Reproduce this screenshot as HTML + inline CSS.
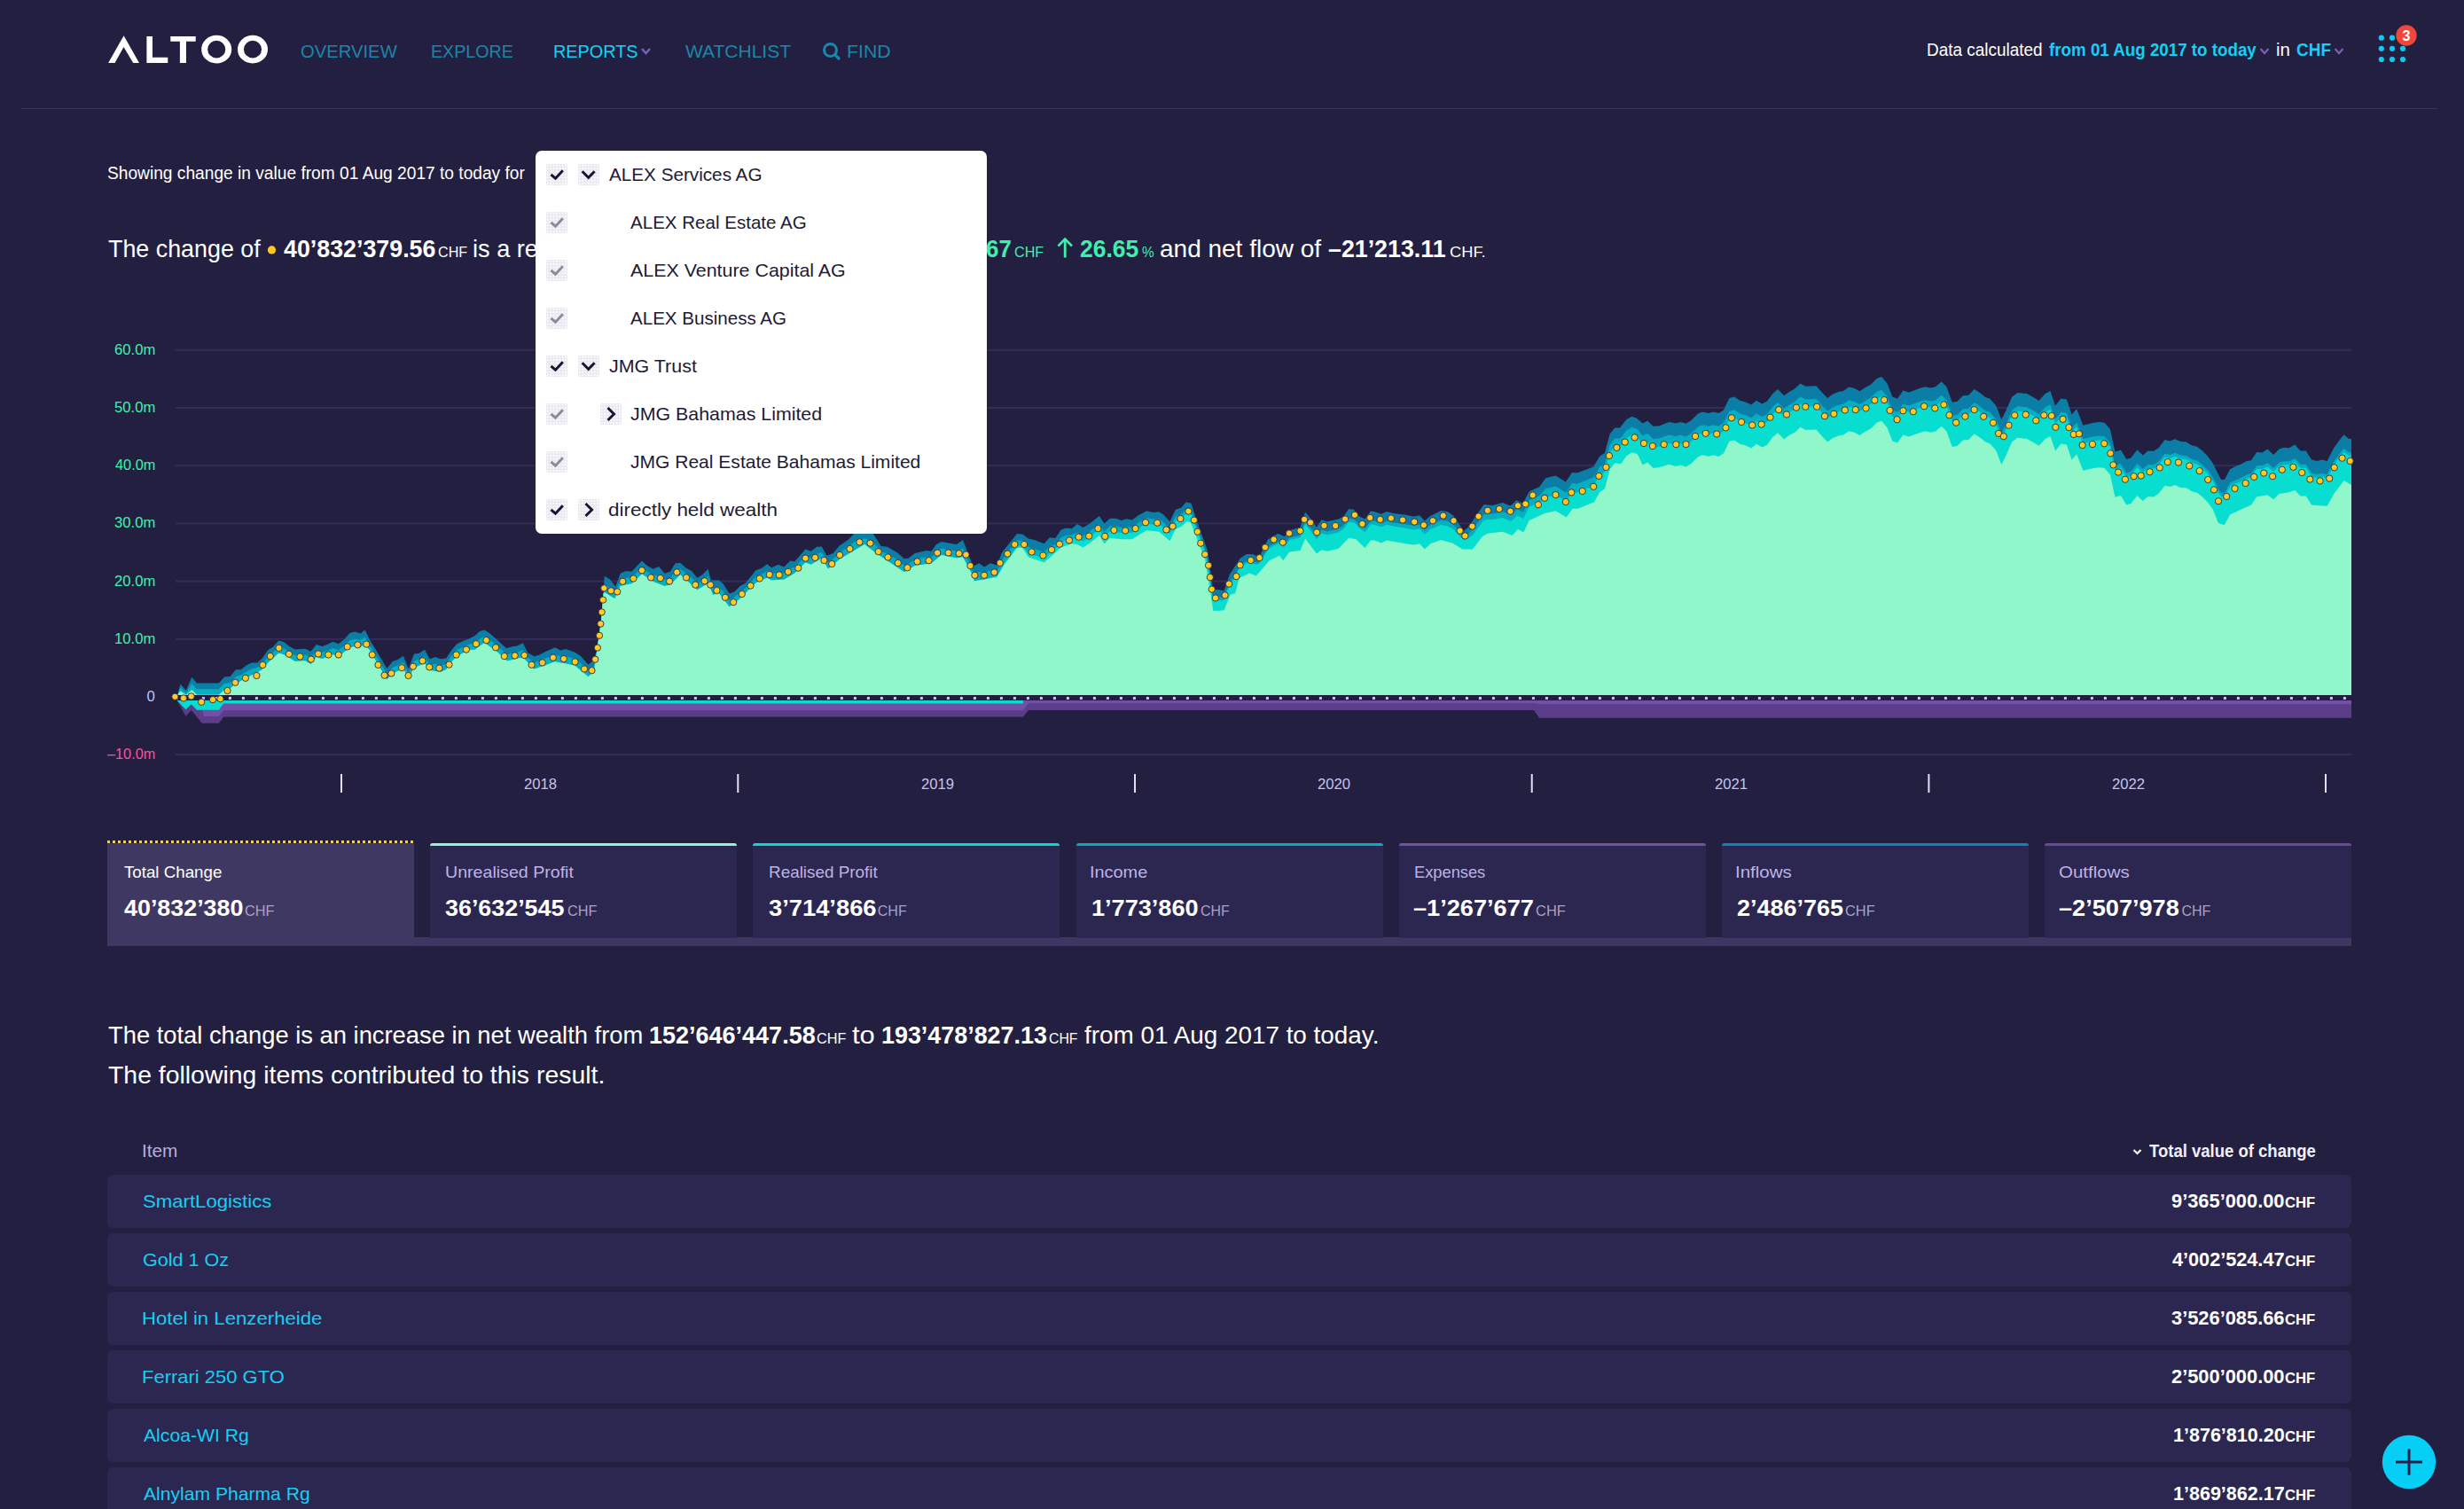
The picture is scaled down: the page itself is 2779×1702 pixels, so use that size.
<!DOCTYPE html>
<html><head><meta charset="utf-8">
<style>
html,body{margin:0;padding:0;}
body{width:2779px;height:1702px;overflow:hidden;background:#231f40;font-family:"Liberation Sans",sans-serif;position:relative;color:#fff;}
.t{position:absolute;white-space:nowrap;line-height:1;}
.b{font-weight:bold;}
.nav{color:#1b86a8;font-size:20.4px;}
.cy{color:#12cdf2;}
.card{position:absolute;top:951px;width:346px;height:106px;background:#2c2750;}
.card .bar{position:absolute;left:0;top:-3px;width:100%;height:4px;border-radius:3px 3px 0 0;}
.cl{position:absolute;left:19px;color:#bdb3e6;font-size:18.4px;white-space:nowrap;line-height:1;}
.cv{position:absolute;left:19px;color:#fff;font-size:25.4px;font-weight:bold;white-space:nowrap;line-height:1;}
.cv span{font-size:16px;font-weight:normal;color:#a9a2c4;}
.row{position:absolute;left:121px;width:2531px;height:60px;background:#2c2750;border-radius:7px;}
.row .n{position:absolute;left:40.7px;color:#12cdf2;font-size:21px;white-space:nowrap;line-height:1;}
.row .v{position:absolute;right:41px;color:#fff;font-size:21.6px;font-weight:bold;white-space:nowrap;line-height:1;}
.row .v span{font-size:16px;}
.dd{position:absolute;left:604px;top:170px;width:509px;height:432px;background:#fff;border-radius:7px;}
.dd .r{position:absolute;left:0;height:54px;width:509px;}
.cb{position:absolute;left:12px;top:13px;width:24px;height:24px;border-radius:2px;background:#e9e9f2 radial-gradient(circle,#fff 0.7px,transparent 1.1px) 0 0/3.4px 3.4px;}
.ex{position:absolute;top:13px;width:24px;height:24px;border-radius:2px;background:#e9e9f2 radial-gradient(circle,#fff 0.7px,transparent 1.1px) 0 0/3.4px 3.4px;}
.dt{position:absolute;color:#1d1a36;font-size:21px;white-space:nowrap;line-height:1;}
.yl{position:absolute;font-size:16.6px;white-space:nowrap;line-height:1;text-align:right;}
.xl{position:absolute;font-size:16.5px;color:#c3c3ef;white-space:nowrap;line-height:1;}
</style></head><body>
<!-- header -->
<svg style="position:absolute;left:0;top:0" width="330" height="90">
<g fill="#fff">
<polygon points="122.1,70.9 139.6,40.3 157,70.9 150.2,70.9 139.5,53 129.5,70.9"/>
<polygon points="165.4,40.9 172,40.9 172,64.8 189.3,64.8 189.3,70.9 165.4,70.9"/>
<polygon points="192.3,40.9 220.7,40.9 220.7,46.8 210,46.8 210,70.9 202.9,70.9 202.9,46.8 192.3,46.8"/>
</g>
<path fill="#fff" fill-rule="evenodd" d="M227.20,55.65 a17,15.85 0 1,0 34,0 a17,15.85 0 1,0 -34,0 Z M234.15,55.65 a10.05,9.8 0 1,0 20.1,0 a10.05,9.8 0 1,0 -20.1,0 Z"/>
<path fill="#fff" fill-rule="evenodd" d="M268.00,55.65 a17,15.85 0 1,0 34,0 a17,15.85 0 1,0 -34,0 Z M274.95,55.65 a10.05,9.8 0 1,0 20.1,0 a10.05,9.8 0 1,0 -20.1,0 Z"/>
</svg>
<svg style="position:absolute;left:720px;top:50px" width="20" height="16"><polyline points="4,5 8.5,10 13,5" fill="none" stroke="#7a5db4" stroke-width="2.6"/></svg>
<svg style="position:absolute;left:926px;top:46px" width="26" height="24"><circle cx="10.5" cy="10.5" r="7" fill="none" stroke="#1b86a8" stroke-width="3"/><line x1="15.5" y1="15.5" x2="21" y2="21" stroke="#1b86a8" stroke-width="3.2"/></svg>

<svg style="position:absolute;left:2546px;top:50px" width="16" height="16"><polyline points="3.5,5 8,10 12.5,5" fill="none" stroke="#7a5db4" stroke-width="2.4"/></svg>
<svg style="position:absolute;left:2630px;top:50px" width="16" height="16"><polyline points="3.5,5 8,10 12.5,5" fill="none" stroke="#7a5db4" stroke-width="2.4"/></svg>
<svg style="position:absolute;left:2670px;top:24px" width="60" height="56">
<g fill="#0ccaf2">
<circle cx="15.8" cy="18.7" r="3.1"/><circle cx="28" cy="18.7" r="3.1"/><circle cx="40" cy="18.7" r="3.1"/>
<circle cx="15.8" cy="30.8" r="3.1"/><circle cx="28" cy="30.8" r="3.1"/><circle cx="40" cy="30.8" r="3.1"/>
<circle cx="15.8" cy="43" r="3.1"/><circle cx="28" cy="43" r="3.1"/><circle cx="40" cy="43" r="3.1"/>
</g>
<circle cx="44" cy="16" r="11.7" fill="#f0473a"/>
<text x="44" y="22" text-anchor="middle" font-family="Liberation Sans" font-weight="bold" font-size="16" fill="#fff">3</text>
</svg>
<div style="position:absolute;left:24px;top:122px;width:2725px;height:1px;background:#3b3659"></div>


<!-- headline -->

<!-- chart -->
<svg style="position:absolute;left:0;top:0" width="2779" height="920">
<g fill="#332d58">
<rect x="198" y="393.8" width="2454" height="2"/>
<rect x="198" y="459" width="2454" height="2"/>
<rect x="198" y="524.2" width="2454" height="2"/>
<rect x="198" y="589.4" width="2454" height="2"/>
<rect x="198" y="654.6" width="2454" height="2"/>
<rect x="198" y="719.8" width="2454" height="2"/>
<rect x="198" y="850" width="2454" height="2"/>
</g>
<path fill="#0a7ea6" d="M199,784.0 L199.0,784.0 L200.0,784.0 L203.5,771.6 L209.9,778.7 L216.3,763.8 L222.0,770.6 L246.8,770.6 L253.2,763.5 L259.6,763.1 L266.0,755.3 L271.7,755.3 L278.0,750.3 L283.8,747.5 L289.4,747.5 L290.1,747.5 L295.8,742.5 L302.2,733.3 L307.9,729.7 L314.3,722.6 L320.0,724.0 L326.4,729.0 L332.8,732.6 L344.1,731.8 L350.5,734.7 L356.9,726.9 L363.3,729.0 L369.0,726.9 L375.4,723.8 L381.8,726.2 L388.2,721.2 L394.5,714.1 L400.2,712.4 L406.6,714.5 L411.6,710.5 L417.3,721.9 L423.7,732.6 L436.4,753.9 L442.8,746.0 L448.5,743.9 L454.9,739.7 L460.6,753.9 L467.0,737.5 L472.7,736.8 L479.0,732.8 L484.7,743.2 L491.1,741.1 L496.8,743.2 L503.2,742.5 L508.9,733.7 L515.3,726.2 L521.7,723.3 L528.0,720.9 L535.7,717.1 L540.7,712.2 L546.3,710.5 L551.3,713.6 L560.5,721.4 L571.2,731.3 L571.9,731.1 L577.6,729.2 L583.3,728.5 L589.7,725.2 L595.3,736.3 L602.4,740.3 L607.4,739.1 L615.2,734.9 L625.9,730.3 L632.3,733.5 L638.0,732.0 L647.9,735.6 L655.0,739.9 L663.5,749.8 L669.9,744.1 L673.5,732.0 L677.7,702.2 L680.6,669.5 L681.7,649.7 L687.7,653.2 L693.4,660.8 L694.1,661.7 L699.7,646.8 L706.1,644.0 L712.5,644.7 L723.9,632.6 L730.3,638.3 L736.7,641.8 L743.1,639.0 L749.5,646.8 L755.9,644.7 L761.5,635.5 L767.2,634.7 L773.6,640.4 L780.0,644.0 L786.4,651.8 L792.1,648.2 L798.5,641.8 L802.0,654.6 L804.2,654.6 L810.5,654.6 L815.5,658.2 L822.6,669.5 L828.3,667.4 L834.7,661.0 L841.1,657.5 L852.4,643.3 L858.8,641.1 L865.2,636.2 L870.0,640.3 L877.8,636.7 L884.2,639.5 L891.3,632.4 L896.3,633.2 L908.4,619.4 L914.7,621.8 L921.1,616.8 L926.8,616.5 L932.5,626.8 L933.9,626.2 L939.6,623.9 L946.7,615.4 L957.4,608.3 L963.8,601.0 L975.1,600.4 L983.6,600.0 L992.2,613.8 L993.6,616.1 L1000.7,616.8 L1012.0,623.2 L1019.9,630.3 L1024.8,629.6 L1031.9,623.9 L1044.7,621.1 L1050.4,621.8 L1056.1,614.0 L1061.8,610.9 L1070.3,612.6 L1078.8,614.0 L1085.9,609.0 L1091.6,623.2 L1097.3,638.8 L1098.7,638.1 L1104.4,635.3 L1110.0,639.5 L1117.2,635.3 L1124.3,637.4 L1130.0,623.2 L1132.8,619.7 L1147.0,601.9 L1152.7,602.5 L1153.4,602.6 L1159.8,607.6 L1166.9,609.0 L1177.5,613.3 L1183.9,606.2 L1190.3,606.9 L1196.7,597.6 L1202.4,595.5 L1208.8,596.2 L1215.0,591.1 L1221.4,595.1 L1228.5,590.9 L1239.8,581.9 L1245.5,590.4 L1251.9,584.7 L1258.3,584.7 L1264.7,586.9 L1270.4,585.2 L1276.8,586.6 L1283.9,581.2 L1293.1,576.2 L1300.9,578.1 L1307.3,577.2 L1312.3,580.5 L1319.4,588.3 L1325.8,574.8 L1332.2,572.7 L1337.8,566.3 L1338.5,566.5 L1342.8,567.5 L1343.5,567.7 L1350.6,589.7 L1359.1,613.0 L1362.0,621.0 L1367.7,665.0 L1368.4,665.0 L1374.1,665.0 L1380.5,666.4 L1386.8,648.0 L1387.6,646.8 L1393.2,638.2 L1397.5,631.6 L1398.9,629.5 L1406.0,624.9 L1408.9,625.0 L1413.1,625.2 L1416.7,626.7 L1420.2,628.1 L1430.2,608.2 L1431.6,607.4 L1441.5,601.8 L1443.0,602.5 L1447.2,604.6 L1448.6,605.3 L1454.3,598.2 L1466.4,594.7 L1472.1,577.6 L1478.5,585.5 L1484.9,594.7 L1490.5,586.2 L1496.9,588.3 L1509.7,585.5 L1515.4,582.6 L1521.1,574.1 L1526.8,574.8 L1529.5,578.1 L1533.2,582.6 L1539.5,585.5 L1545.9,576.6 L1550.0,577.0 L1557.8,579.8 L1564.2,577.0 L1571.3,579.1 L1584.1,580.5 L1594.0,582.5 L1594.7,582.6 L1601.1,581.2 L1606.8,587.6 L1613.2,581.9 L1625.3,576.0 L1632.4,577.0 L1638.0,580.7 L1638.8,581.2 L1649.4,596.8 L1650.9,599.0 L1655.8,594.7 L1660.8,587.5 L1672.2,571.1 L1673.6,569.1 L1677.8,569.4 L1683.5,569.9 L1694.9,567.0 L1703.4,570.6 L1705.5,568.7 L1710.5,564.2 L1711.9,564.9 L1717.6,567.7 L1718.3,566.4 L1724.7,554.2 L1736.1,549.3 L1741.8,541.3 L1743.2,539.3 L1754.5,536.5 L1765.9,543.6 L1766.6,542.5 L1773.0,532.9 L1773.7,533.0 L1778.7,533.6 L1785.8,530.8 L1797.2,526.5 L1797.9,525.3 L1804.3,514.5 L1809.9,510.9 L1815.6,489.6 L1821.3,482.5 L1827.0,482.5 L1828.4,480.7 L1834.1,473.3 L1840.5,469.7 L1846.2,471.8 L1846.9,472.4 L1852.6,477.5 L1858.2,474.7 L1864.6,480.8 L1871.0,480.4 L1882.4,476.1 L1890.0,477.4 L1895.7,476.0 L1901.4,477.8 L1907.0,474.6 L1914.9,466.8 L1919.8,464.6 L1926.9,466.1 L1932.6,464.6 L1938.3,466.1 L1944.0,462.5 L1950.4,449.0 L1956.0,447.6 L1962.4,451.8 L1968.1,453.3 L1975.2,456.5 L1980.9,451.8 L1987.3,455.4 L1993.0,452.6 L1999.4,444.0 L2005.0,439.1 L2012.2,446.2 L2017.8,441.9 L2024.2,438.4 L2030.6,432.4 L2036.3,435.8 L2048.4,435.2 L2054.8,442.6 L2061.2,449.0 L2066.8,444.7 L2073.2,441.9 L2078.9,440.9 L2085.3,436.6 L2091.7,438.1 L2097.4,441.2 L2103.1,437.6 L2110.2,433.4 L2116.6,427.0 L2122.2,424.9 L2128.6,432.7 L2134.3,447.6 L2140.0,449.7 L2146.4,440.5 L2152.8,442.6 L2158.5,440.5 L2164.9,438.1 L2171.2,436.2 L2177.6,437.6 L2182.6,436.6 L2189.7,430.5 L2195.4,436.2 L2201.8,453.7 L2207.5,452.8 L2213.9,446.2 L2220.3,445.7 L2226.6,439.1 L2230.0,441.0 L2234.3,444.1 L2239.2,448.1 L2244.2,449.8 L2251.3,457.6 L2257.3,473.3 L2262.7,462.6 L2269.1,447.7 L2275.5,443.0 L2286.1,444.1 L2293.9,448.4 L2299.6,452.0 L2306.7,444.1 L2312.4,441.0 L2318.1,457.6 L2324.5,449.5 L2330.9,450.5 L2336.5,467.6 L2342.2,461.2 L2349.3,479.7 L2361.4,476.8 L2367.8,476.1 L2373.5,476.8 L2379.9,483.9 L2385.5,509.5 L2391.9,507.4 L2398.3,518.0 L2403.3,516.6 L2410.4,507.4 L2416.8,513.5 L2422.5,508.4 L2428.9,508.8 L2434.5,505.2 L2441.6,496.0 L2447.3,497.4 L2453.0,495.3 L2459.4,498.1 L2465.8,498.4 L2472.2,502.4 L2477.9,503.8 L2484.3,508.8 L2489.9,514.5 L2495.6,522.3 L2502.0,535.0 L2505.0,541.1 L2508.8,541.1 L2515.1,529.3 L2521.4,526.0 L2527.7,523.5 L2534.0,520.0 L2539.0,519.2 L2545.3,509.9 L2551.6,510.4 L2557.4,506.6 L2564.2,512.9 L2570.5,506.6 L2575.6,504.8 L2581.9,505.3 L2588.2,501.6 L2594.5,508.4 L2600.8,508.4 L2607.0,518.4 L2613.4,520.0 L2618.4,518.4 L2624.7,520.0 L2632.2,505.3 L2638.5,496.5 L2643.6,490.2 L2648.6,494.8 L2652.0,495.3 L2652,784.0 Z"/>
<path fill="#05afc2" d="M199,784.0 L199.0,784.0 L200.0,784.0 L203.5,775.5 L209.9,781.4 L216.3,770.9 L222.0,777.2 L246.8,777.2 L253.2,770.8 L259.6,769.9 L266.0,763.1 L271.7,761.6 L278.0,757.4 L283.8,754.5 L289.4,753.1 L290.1,753.0 L295.8,748.9 L302.2,740.4 L307.9,736.1 L314.3,729.7 L320.0,731.1 L326.4,735.5 L332.8,739.3 L344.1,738.5 L350.5,741.8 L356.9,734.0 L363.3,736.1 L369.0,733.9 L375.4,731.0 L381.8,733.3 L388.2,728.3 L394.5,722.2 L400.2,720.7 L406.6,722.1 L411.6,718.7 L417.3,728.0 L423.7,738.8 L436.4,760.2 L442.8,752.8 L448.5,750.4 L454.9,746.8 L460.6,759.5 L467.0,745.4 L472.7,743.8 L479.0,740.5 L484.7,749.6 L491.1,749.1 L496.8,750.6 L503.2,748.9 L508.9,740.2 L515.3,733.3 L521.7,730.0 L528.0,727.0 L535.7,725.0 L540.7,720.7 L546.3,717.8 L551.3,721.1 L560.5,728.2 L571.2,738.1 L571.9,738.3 L577.6,736.7 L583.3,735.7 L589.7,733.2 L595.3,741.8 L602.4,747.5 L607.4,746.0 L615.2,742.5 L625.9,738.3 L632.3,740.5 L638.0,740.3 L647.9,743.0 L655.0,748.1 L663.5,756.5 L669.9,750.9 L673.5,732.0 L677.7,702.2 L680.6,669.5 L681.7,658.9 L687.7,662.5 L693.4,668.0 L694.1,667.7 L699.7,653.9 L706.1,651.8 L712.5,651.5 L723.9,640.0 L730.3,645.0 L736.7,648.9 L743.1,648.8 L749.5,653.9 L755.9,652.2 L761.5,644.7 L767.2,641.5 L773.6,647.1 L780.0,651.8 L786.4,658.5 L792.1,655.1 L798.5,650.0 L802.0,660.3 L804.2,662.8 L810.5,661.7 L815.5,666.7 L822.6,677.0 L828.3,673.8 L834.7,668.1 L841.1,663.2 L852.4,650.4 L858.8,647.9 L865.2,644.0 L870.0,647.4 L877.8,645.4 L884.2,646.6 L891.3,641.0 L896.3,639.9 L908.4,627.0 L914.7,629.2 L921.1,624.9 L926.8,623.0 L932.5,633.1 L933.9,634.0 L939.6,630.4 L946.7,623.2 L957.4,616.5 L963.8,610.9 L975.1,607.2 L983.6,610.2 L992.2,620.3 L993.6,621.9 L1000.7,624.6 L1012.0,631.6 L1019.9,637.8 L1024.8,636.0 L1031.9,631.0 L1044.7,628.6 L1050.4,628.5 L1056.1,622.3 L1061.8,618.5 L1070.3,620.2 L1078.8,621.8 L1085.9,618.6 L1091.6,631.0 L1097.3,644.1 L1098.7,646.7 L1104.4,644.8 L1110.0,646.5 L1117.2,643.6 L1124.3,643.9 L1130.0,631.9 L1132.8,627.8 L1147.0,609.5 L1152.7,609.5 L1153.4,610.0 L1159.8,617.0 L1166.9,618.9 L1177.5,622.8 L1183.9,616.2 L1190.3,614.0 L1196.7,606.2 L1202.4,604.1 L1208.8,603.4 L1215.0,600.7 L1221.4,604.4 L1228.5,600.0 L1239.8,590.7 L1245.5,599.5 L1251.9,593.4 L1258.3,593.6 L1264.7,595.1 L1270.4,594.0 L1276.8,594.7 L1283.9,589.6 L1293.1,584.2 L1300.9,585.6 L1307.3,585.3 L1312.3,589.0 L1319.4,596.2 L1325.8,582.6 L1332.2,580.3 L1337.8,574.3 L1338.5,574.2 L1342.8,575.1 L1343.5,575.9 L1350.6,596.5 L1359.1,619.3 L1362.0,630.9 L1367.7,671.9 L1368.4,673.5 L1374.1,673.3 L1380.5,674.1 L1386.8,656.6 L1387.6,655.1 L1393.2,649.0 L1397.5,638.8 L1398.9,637.1 L1406.0,632.9 L1408.9,632.4 L1413.1,633.1 L1416.7,634.5 L1420.2,634.0 L1430.2,617.0 L1431.6,615.9 L1441.5,610.5 L1443.0,610.7 L1447.2,614.0 L1448.6,613.8 L1454.3,606.4 L1466.4,603.6 L1472.1,587.7 L1478.5,595.8 L1484.9,604.7 L1490.5,597.6 L1496.9,599.4 L1509.7,596.6 L1515.4,592.6 L1521.1,584.9 L1526.8,585.7 L1529.5,588.0 L1533.2,592.2 L1539.5,596.2 L1545.9,587.4 L1550.0,587.6 L1557.8,590.4 L1564.2,587.6 L1571.3,589.4 L1584.1,590.9 L1594.0,592.8 L1594.7,592.8 L1601.1,591.4 L1606.8,597.8 L1613.2,591.9 L1625.3,586.4 L1632.4,587.7 L1638.0,590.7 L1638.8,591.2 L1649.4,603.9 L1650.9,605.5 L1655.8,602.5 L1660.8,597.5 L1672.2,581.5 L1673.6,579.9 L1677.8,579.5 L1683.5,579.5 L1694.9,577.1 L1703.4,580.5 L1705.5,579.5 L1710.5,574.6 L1711.9,574.6 L1717.6,577.5 L1718.3,576.7 L1724.7,564.1 L1736.1,559.1 L1741.8,552.7 L1743.2,551.2 L1754.5,548.4 L1765.9,555.4 L1766.6,554.8 L1773.0,545.3 L1773.7,545.1 L1778.7,545.8 L1785.8,542.9 L1797.2,538.5 L1797.9,537.6 L1804.3,526.6 L1809.9,523.0 L1815.6,501.5 L1821.3,494.4 L1827.0,494.6 L1828.4,493.4 L1834.1,485.7 L1840.5,481.8 L1846.2,483.9 L1846.9,484.4 L1852.6,491.6 L1858.2,488.8 L1864.6,495.0 L1871.0,494.5 L1882.4,490.4 L1890.0,491.9 L1895.7,490.6 L1901.4,492.4 L1907.0,489.2 L1914.9,481.4 L1919.8,479.2 L1926.9,480.7 L1932.6,479.2 L1938.3,480.7 L1944.0,477.1 L1950.4,463.7 L1956.0,462.3 L1962.4,466.5 L1968.1,468.0 L1975.2,471.2 L1980.9,466.5 L1987.3,470.1 L1993.0,467.3 L1999.4,458.7 L2005.0,453.8 L2012.2,461.0 L2017.8,456.7 L2024.2,453.2 L2030.6,447.2 L2036.3,450.6 L2048.4,450.0 L2054.8,457.4 L2061.2,463.8 L2066.8,459.6 L2073.2,456.8 L2078.9,455.8 L2085.3,451.5 L2091.7,453.0 L2097.4,456.1 L2103.1,452.5 L2110.2,448.3 L2116.6,441.9 L2122.2,439.8 L2128.6,447.7 L2134.3,462.6 L2140.0,464.7 L2146.4,455.5 L2152.8,457.6 L2158.5,455.5 L2164.9,453.1 L2171.2,451.2 L2177.6,452.6 L2182.6,451.7 L2189.7,445.6 L2195.4,451.3 L2201.8,468.8 L2207.5,467.9 L2213.9,461.3 L2220.3,460.8 L2226.6,454.2 L2230.0,456.1 L2234.3,459.2 L2239.2,463.2 L2244.2,465.0 L2251.3,472.8 L2257.3,488.5 L2262.7,477.8 L2269.1,462.9 L2275.5,458.2 L2286.1,459.3 L2293.9,463.6 L2299.6,467.3 L2306.7,459.4 L2312.4,456.3 L2318.1,472.9 L2324.5,464.8 L2330.9,465.8 L2336.5,482.9 L2342.2,476.5 L2349.3,495.0 L2361.4,492.2 L2367.8,491.5 L2373.5,492.2 L2379.9,499.3 L2385.5,524.9 L2391.9,522.8 L2398.3,533.4 L2403.3,532.0 L2410.4,522.8 L2416.8,529.0 L2422.5,523.9 L2428.9,524.3 L2434.5,520.7 L2441.6,511.5 L2447.3,512.9 L2453.0,510.8 L2459.4,513.6 L2465.8,513.9 L2472.2,517.9 L2477.9,519.4 L2484.3,524.4 L2489.9,530.1 L2495.6,537.9 L2502.0,551.5 L2505.0,556.1 L2508.8,556.4 L2515.1,544.6 L2521.4,541.4 L2527.7,538.8 L2534.0,535.5 L2539.0,534.3 L2545.3,525.0 L2551.6,525.0 L2557.4,522.1 L2564.2,528.0 L2570.5,521.7 L2575.6,520.2 L2581.9,520.3 L2588.2,516.9 L2594.5,523.7 L2600.8,523.7 L2607.0,533.8 L2613.4,535.0 L2618.4,534.0 L2624.7,535.2 L2632.2,520.8 L2638.5,512.1 L2643.6,505.7 L2648.6,509.8 L2652.0,510.8 L2652,784.0 Z"/>
<path fill="#08ded0" d="M199,784.0 L199.0,784.0 L200.0,784.0 L203.5,779.4 L209.9,784.0 L216.3,778.0 L222.0,783.7 L246.8,783.7 L253.2,778.0 L259.6,776.6 L266.0,771.0 L271.7,767.9 L278.0,764.5 L283.8,761.6 L289.4,758.8 L290.1,758.4 L295.8,755.3 L302.2,747.5 L307.9,742.5 L314.3,736.8 L320.0,738.2 L326.4,742.1 L332.8,746.0 L344.1,745.3 L350.5,748.9 L356.9,741.1 L363.3,743.2 L369.0,740.8 L375.4,738.2 L381.8,740.4 L388.2,735.4 L394.5,730.4 L400.2,729.0 L406.6,729.7 L411.6,726.9 L417.3,734.0 L423.7,744.9 L436.4,766.6 L442.8,759.5 L448.5,756.9 L454.9,753.9 L460.6,765.2 L467.0,753.2 L472.7,750.8 L479.0,748.2 L484.7,756.0 L491.1,757.1 L496.8,758.0 L503.2,755.3 L508.9,746.8 L515.3,740.4 L521.7,736.7 L528.0,733.0 L535.7,732.8 L540.7,729.1 L546.3,725.0 L551.3,728.5 L560.5,735.0 L571.2,744.9 L571.9,745.5 L577.6,744.2 L583.3,742.8 L589.7,741.3 L595.3,747.3 L602.4,754.8 L607.4,753.0 L615.2,750.2 L625.9,746.3 L632.3,747.5 L638.0,748.6 L647.9,750.5 L655.0,756.3 L663.5,763.3 L669.9,757.6 L673.5,732.0 L677.7,702.2 L680.6,669.5 L681.7,668.1 L687.7,671.7 L693.4,675.2 L694.1,673.6 L699.7,661.0 L706.1,659.6 L712.5,658.2 L723.9,647.5 L730.3,651.8 L736.7,656.0 L743.1,658.5 L749.5,661.0 L755.9,659.6 L761.5,654.0 L767.2,648.2 L773.6,653.9 L780.0,659.6 L786.4,665.3 L792.1,662.0 L798.5,658.2 L802.0,666.1 L804.2,671.0 L810.5,668.8 L815.5,675.3 L822.6,684.5 L828.3,680.1 L834.7,675.2 L841.1,668.8 L852.4,657.5 L858.8,654.6 L865.2,651.8 L870.0,654.5 L877.8,654.1 L884.2,653.8 L891.3,649.6 L896.3,646.6 L908.4,634.6 L914.7,636.7 L921.1,632.9 L926.8,629.6 L932.5,639.3 L933.9,641.7 L939.6,636.9 L946.7,631.0 L957.4,624.6 L963.8,620.8 L975.1,614.0 L983.6,620.4 L992.2,626.8 L993.6,627.7 L1000.7,632.4 L1012.0,640.0 L1019.9,645.2 L1024.8,642.3 L1031.9,638.1 L1044.7,636.2 L1050.4,635.3 L1056.1,630.7 L1061.8,626.0 L1070.3,627.8 L1078.8,629.6 L1085.9,628.2 L1091.6,638.8 L1097.3,649.5 L1098.7,655.2 L1104.4,654.2 L1110.0,653.4 L1117.2,651.5 L1124.3,649.9 L1130.0,639.7 L1132.8,635.0 L1147.0,615.9 L1152.7,615.1 L1153.4,616.0 L1159.8,624.5 L1166.9,626.4 L1177.5,629.6 L1183.9,623.2 L1190.3,618.8 L1196.7,611.7 L1202.4,609.5 L1208.8,608.1 L1215.0,607.0 L1221.4,610.5 L1228.5,606.1 L1239.8,596.9 L1245.5,605.8 L1251.9,599.6 L1258.3,600.0 L1264.7,601.1 L1270.4,600.5 L1276.8,600.9 L1283.9,596.1 L1293.1,590.6 L1300.9,591.7 L1307.3,591.5 L1312.3,595.2 L1319.4,601.7 L1325.8,588.0 L1332.2,585.2 L1337.8,579.3 L1338.5,579.0 L1342.8,579.6 L1343.5,580.7 L1350.6,600.3 L1359.1,622.5 L1362.0,635.8 L1367.7,675.1 L1368.4,677.4 L1374.1,676.9 L1380.5,677.2 L1386.8,659.8 L1387.6,658.1 L1393.2,652.6 L1397.5,641.0 L1398.9,639.4 L1406.0,635.3 L1408.9,634.7 L1413.1,635.5 L1416.7,636.9 L1420.2,635.9 L1430.2,619.8 L1431.6,618.6 L1441.5,613.3 L1443.0,613.4 L1447.2,617.1 L1448.6,616.6 L1454.3,609.1 L1466.4,606.5 L1472.1,591.1 L1478.5,599.2 L1484.9,608.1 L1490.5,601.5 L1496.9,603.3 L1509.7,600.5 L1515.4,596.2 L1521.1,588.8 L1526.8,589.6 L1529.5,591.6 L1533.2,595.8 L1539.5,600.2 L1545.9,591.5 L1550.0,591.7 L1557.8,594.5 L1564.2,591.7 L1571.3,593.5 L1584.1,595.5 L1594.0,597.5 L1594.7,597.5 L1601.1,596.3 L1606.8,602.8 L1613.2,596.9 L1625.3,591.9 L1632.4,593.6 L1638.0,596.3 L1638.8,596.8 L1649.4,608.1 L1650.9,609.3 L1655.8,607.2 L1660.8,603.7 L1672.2,588.2 L1673.6,586.9 L1677.8,586.0 L1683.5,586.0 L1694.9,584.0 L1703.4,587.7 L1705.5,587.2 L1710.5,582.3 L1711.9,581.8 L1717.6,584.9 L1718.3,584.5 L1724.7,571.7 L1736.1,566.9 L1741.8,561.9 L1743.2,560.9 L1754.5,558.3 L1765.9,565.0 L1766.6,564.8 L1773.0,555.4 L1773.7,554.8 L1778.7,555.4 L1785.8,552.5 L1797.2,547.8 L1797.9,547.1 L1804.3,535.9 L1809.9,532.2 L1815.6,510.5 L1821.3,503.3 L1827.0,503.5 L1828.4,502.7 L1834.1,494.6 L1840.5,490.6 L1846.2,492.5 L1846.9,492.9 L1852.6,501.4 L1858.2,498.5 L1864.6,504.7 L1871.0,504.0 L1882.4,499.9 L1890.0,501.5 L1895.7,500.1 L1901.4,501.9 L1907.0,498.6 L1914.9,490.8 L1919.8,488.5 L1926.9,490.0 L1932.6,488.4 L1938.3,489.9 L1944.0,486.2 L1950.4,472.7 L1956.0,471.2 L1962.4,475.4 L1968.1,476.8 L1975.2,480.0 L1980.9,475.2 L1987.3,478.8 L1993.0,476.0 L1999.4,467.3 L2005.0,462.4 L2012.2,469.4 L2017.8,465.1 L2024.2,461.5 L2030.6,455.5 L2036.3,458.8 L2048.4,458.1 L2054.8,465.5 L2061.2,471.8 L2066.8,467.5 L2073.2,464.6 L2078.9,463.6 L2085.3,459.2 L2091.7,460.7 L2097.4,463.7 L2103.1,460.1 L2110.2,455.8 L2116.6,449.4 L2122.2,447.2 L2128.6,455.0 L2134.3,469.8 L2140.0,471.9 L2146.4,462.6 L2152.8,464.7 L2158.5,462.5 L2164.9,460.1 L2171.2,458.1 L2177.6,459.5 L2182.6,458.4 L2189.7,452.3 L2195.4,457.9 L2201.8,475.4 L2207.5,474.4 L2213.9,467.8 L2220.3,467.2 L2226.6,460.6 L2230.0,462.4 L2234.3,465.5 L2239.2,469.5 L2244.2,471.1 L2251.3,478.9 L2257.3,494.5 L2262.7,483.8 L2269.1,468.8 L2275.5,464.1 L2286.1,465.1 L2293.9,469.3 L2299.6,472.8 L2306.7,464.9 L2312.4,461.7 L2318.1,478.3 L2324.5,470.1 L2330.9,471.1 L2336.5,488.1 L2342.2,481.7 L2349.3,500.1 L2361.4,497.1 L2367.8,496.4 L2373.5,497.0 L2379.9,504.1 L2385.5,529.6 L2391.9,527.4 L2398.3,538.0 L2403.3,536.5 L2410.4,527.3 L2416.8,533.3 L2422.5,528.2 L2428.9,528.5 L2434.5,524.9 L2441.6,515.6 L2447.3,517.0 L2453.0,515.0 L2459.4,517.8 L2465.8,518.1 L2472.2,522.1 L2477.9,523.5 L2484.3,528.5 L2489.9,534.2 L2495.6,542.0 L2502.0,555.9 L2505.0,560.1 L2508.8,560.5 L2515.1,548.7 L2521.4,545.6 L2527.7,542.9 L2534.0,539.7 L2539.0,538.4 L2545.3,529.1 L2551.6,528.9 L2557.4,526.2 L2564.2,532.1 L2570.5,525.8 L2575.6,524.3 L2581.9,524.3 L2588.2,521.0 L2594.5,527.8 L2600.8,527.8 L2607.0,537.9 L2613.4,539.0 L2618.4,538.1 L2624.7,539.3 L2632.2,524.9 L2638.5,516.3 L2643.6,509.8 L2648.6,513.8 L2652.0,514.9 L2652,784.0 Z"/>
<path fill="#8ff7c9" d="M199,784.0 L199.0,784.0 L200.0,784.0 L203.5,779.4 L209.9,784.0 L216.3,778.0 L222.0,783.7 L246.8,783.7 L253.2,778.0 L259.6,776.6 L266.0,771.0 L271.7,767.9 L278.0,764.5 L283.8,761.6 L289.4,758.8 L290.1,758.4 L295.8,755.3 L302.2,747.5 L307.9,742.5 L314.3,736.8 L320.0,738.2 L326.4,742.1 L332.8,746.0 L344.1,745.3 L350.5,748.9 L356.9,741.1 L363.3,743.2 L369.0,740.8 L375.4,738.2 L381.8,740.4 L388.2,735.4 L394.5,730.4 L400.2,729.0 L406.6,729.7 L411.6,726.9 L417.3,734.0 L423.7,744.9 L436.4,766.6 L442.8,759.5 L448.5,756.9 L454.9,753.9 L460.6,765.2 L467.0,753.2 L472.7,750.8 L479.0,748.2 L484.7,756.0 L491.1,757.1 L496.8,758.0 L503.2,755.3 L508.9,746.8 L515.3,740.4 L521.7,736.7 L528.0,733.0 L535.7,732.8 L540.7,729.1 L546.3,725.0 L551.3,728.5 L560.5,735.0 L571.2,744.9 L571.9,745.5 L577.6,744.2 L583.3,742.8 L589.7,741.3 L595.3,747.3 L602.4,754.8 L607.4,753.0 L615.2,750.2 L625.9,746.3 L632.3,747.5 L638.0,748.6 L647.9,750.5 L655.0,756.3 L663.5,763.3 L669.9,757.6 L673.5,732.0 L677.7,702.2 L680.6,669.5 L681.7,668.1 L687.7,671.7 L693.4,675.2 L694.1,673.6 L699.7,661.0 L706.1,659.6 L712.5,658.2 L723.9,647.5 L730.3,651.8 L736.7,656.0 L743.1,658.5 L749.5,661.0 L755.9,659.6 L761.5,654.0 L767.2,648.2 L773.6,653.9 L780.0,659.6 L786.4,665.3 L792.1,662.0 L798.5,658.2 L802.0,666.1 L804.2,671.0 L810.5,668.8 L815.5,675.3 L822.6,684.5 L828.3,680.1 L834.7,675.2 L841.1,668.8 L852.4,657.5 L858.8,654.6 L865.2,651.8 L870.0,654.5 L877.8,654.1 L884.2,653.8 L891.3,649.6 L896.3,646.6 L908.4,634.6 L914.7,636.7 L921.1,632.9 L926.8,629.6 L932.5,639.3 L933.9,641.7 L939.6,636.9 L946.7,631.0 L957.4,624.6 L963.8,620.8 L975.1,614.0 L983.6,620.4 L992.2,626.8 L993.6,627.7 L1000.7,632.4 L1012.0,640.0 L1019.9,645.2 L1024.8,642.3 L1031.9,638.1 L1044.7,636.2 L1050.4,635.3 L1056.1,630.7 L1061.8,626.0 L1070.3,627.8 L1078.8,629.6 L1085.9,628.2 L1091.6,638.8 L1097.3,649.5 L1098.7,655.2 L1104.4,654.5 L1110.0,653.8 L1117.2,652.3 L1124.3,650.9 L1130.0,641.4 L1132.8,636.7 L1147.0,618.2 L1152.7,617.5 L1153.4,618.6 L1159.8,628.2 L1166.9,630.8 L1177.5,634.6 L1183.9,628.9 L1190.3,623.2 L1196.7,617.5 L1202.4,615.5 L1208.8,613.3 L1215.0,614.0 L1221.4,617.4 L1228.5,613.0 L1239.8,603.9 L1245.5,613.2 L1251.9,606.8 L1258.3,607.5 L1264.7,608.2 L1270.4,608.2 L1276.8,608.2 L1283.9,603.8 L1293.1,598.2 L1300.9,599.0 L1307.3,599.7 L1312.3,604.1 L1319.4,610.3 L1325.8,596.8 L1332.2,594.0 L1337.8,588.9 L1338.5,588.3 L1342.8,589.0 L1343.5,590.8 L1350.6,609.1 L1359.1,630.9 L1362.0,649.0 L1367.7,684.7 L1368.4,689.1 L1374.1,688.8 L1380.5,688.4 L1386.8,672.7 L1387.6,670.7 L1393.2,669.3 L1397.5,652.2 L1398.9,651.5 L1406.0,648.0 L1408.9,646.5 L1413.1,648.1 L1416.7,649.4 L1420.2,645.4 L1430.2,633.9 L1431.6,632.3 L1441.5,627.4 L1443.0,626.6 L1447.2,632.3 L1448.6,630.3 L1454.3,622.4 L1466.4,621.0 L1472.1,607.5 L1478.5,616.0 L1484.9,624.5 L1490.5,620.3 L1496.9,621.7 L1509.7,618.8 L1515.4,612.8 L1521.1,606.8 L1526.8,607.8 L1529.5,608.2 L1533.2,611.9 L1539.5,618.1 L1545.9,609.6 L1550.0,609.6 L1557.8,612.5 L1564.2,609.6 L1571.3,610.8 L1584.1,612.9 L1594.0,614.6 L1594.7,614.5 L1601.1,613.2 L1606.8,619.6 L1613.2,613.2 L1625.3,608.9 L1632.4,610.9 L1638.0,612.5 L1638.8,613.0 L1649.4,619.6 L1650.9,619.6 L1655.8,619.6 L1660.8,619.6 L1672.2,604.7 L1673.6,604.0 L1677.8,601.8 L1683.5,601.1 L1694.9,599.7 L1703.4,603.1 L1705.5,603.9 L1710.5,598.4 L1711.9,596.8 L1717.6,600.0 L1718.3,600.4 L1724.7,586.9 L1736.1,581.7 L1741.8,579.1 L1743.2,578.8 L1754.5,576.3 L1765.9,583.0 L1766.6,583.4 L1773.0,574.4 L1773.7,573.4 L1778.7,574.1 L1785.8,571.2 L1797.2,566.6 L1797.9,566.3 L1804.3,554.9 L1809.9,551.4 L1815.6,529.4 L1821.3,522.3 L1827.0,522.9 L1828.4,523.0 L1834.1,514.5 L1840.5,510.2 L1846.2,512.1 L1846.9,512.3 L1852.6,524.4 L1858.2,521.6 L1864.6,528.0 L1871.0,527.3 L1882.4,523.7 L1890.0,525.9 L1895.7,524.5 L1901.4,526.4 L1907.0,523.2 L1914.9,515.4 L1919.8,513.3 L1926.9,514.8 L1932.6,513.3 L1938.3,514.9 L1944.0,511.3 L1950.4,497.8 L1956.0,496.5 L1962.4,500.7 L1968.1,502.2 L1975.2,505.5 L1980.9,500.8 L1987.3,504.5 L1993.0,501.7 L1999.4,493.1 L2005.0,488.3 L2012.2,495.4 L2017.8,491.1 L2024.2,487.7 L2030.6,481.7 L2036.3,485.1 L2048.4,484.6 L2054.8,492.0 L2061.2,498.5 L2066.8,494.2 L2073.2,491.4 L2078.9,490.5 L2085.3,486.2 L2091.7,487.8 L2097.4,490.9 L2103.1,487.3 L2110.2,483.2 L2116.6,476.8 L2122.2,474.7 L2128.6,482.6 L2134.3,497.5 L2140.0,499.6 L2146.4,490.5 L2152.8,492.6 L2158.5,490.5 L2164.9,488.2 L2171.2,486.3 L2177.6,487.7 L2182.6,486.8 L2189.7,480.7 L2195.4,486.4 L2201.8,504.0 L2207.5,503.1 L2213.9,496.6 L2220.3,496.1 L2226.6,489.5 L2230.0,491.4 L2234.3,494.6 L2239.2,498.6 L2244.2,500.3 L2251.3,508.2 L2257.3,523.9 L2262.7,513.2 L2269.1,498.4 L2275.5,493.7 L2286.1,494.9 L2293.9,499.2 L2299.6,502.8 L2306.7,495.0 L2312.4,491.9 L2318.1,508.5 L2324.5,500.5 L2330.9,501.5 L2336.5,518.7 L2342.2,512.3 L2349.3,530.8 L2361.4,528.0 L2367.8,527.3 L2373.5,528.1 L2379.9,535.2 L2385.5,560.8 L2391.9,558.8 L2398.3,569.4 L2403.3,568.0 L2410.4,558.9 L2416.8,565.0 L2422.5,559.9 L2428.9,560.4 L2434.5,556.8 L2441.6,547.7 L2447.3,549.1 L2453.0,547.0 L2459.4,549.9 L2465.8,550.2 L2472.2,554.2 L2477.9,555.7 L2484.3,560.7 L2489.9,566.4 L2495.6,574.3 L2502.0,590.0 L2505.0,591.0 L2508.8,592.2 L2515.1,580.4 L2521.4,577.5 L2527.7,574.6 L2534.0,571.8 L2539.0,569.6 L2545.3,560.3 L2551.6,559.2 L2557.4,558.2 L2564.2,563.3 L2570.5,557.0 L2575.6,556.2 L2581.9,555.2 L2588.2,552.7 L2594.5,559.5 L2600.8,559.5 L2607.0,569.6 L2613.4,570.0 L2618.4,570.4 L2624.7,570.8 L2632.2,557.0 L2638.5,548.7 L2643.6,541.9 L2648.6,544.9 L2652.0,546.9 L2652,784.0 Z"/>
<!-- negative layers -->
<polygon fill="#5c3d8a" points="199.7,790 209.5,807.7 215.8,801.1 228,815.7 246.8,815.7 252.2,808.6 1154,808.6 1160,801 1730,801 1736,809.7 2652,809.7 2652,790"/>
<polygon fill="#7150a8" points="199.7,790 209.5,800.2 215.8,794.3 222,800.8 228,800.8 230,808 246.8,808 252.2,801.1 1154,801.1 1160,793.2 1730,793.2 1736,794.2 2652,794.2 2652,790"/>
<polygon fill="#07dccf" points="199.7,790 209.5,800.2 215.8,794.3 222,800.8 246.8,800.8 252.2,793.4 1154,793.4 1154,790"/>
<rect x="199" y="784" width="1453" height="6" fill="#221d3d"/>
<rect x="199" y="784" width="2453" height="6" fill="#221d3d"/>
<g fill="#cbc5f2" id="zsq"><rect x="197.9" y="786" width="3" height="3"/><rect x="212.9" y="786" width="3" height="3"/><rect x="227.9" y="786" width="3" height="3"/><rect x="242.9" y="786" width="3" height="3"/><rect x="257.9" y="786" width="3" height="3"/><rect x="272.9" y="786" width="3" height="3"/><rect x="287.9" y="786" width="3" height="3"/><rect x="302.9" y="786" width="3" height="3"/><rect x="317.9" y="786" width="3" height="3"/><rect x="332.9" y="786" width="3" height="3"/><rect x="347.9" y="786" width="3" height="3"/><rect x="362.9" y="786" width="3" height="3"/><rect x="377.9" y="786" width="3" height="3"/><rect x="392.9" y="786" width="3" height="3"/><rect x="407.9" y="786" width="3" height="3"/><rect x="422.9" y="786" width="3" height="3"/><rect x="437.9" y="786" width="3" height="3"/><rect x="452.9" y="786" width="3" height="3"/><rect x="467.9" y="786" width="3" height="3"/><rect x="482.9" y="786" width="3" height="3"/><rect x="497.9" y="786" width="3" height="3"/><rect x="512.9" y="786" width="3" height="3"/><rect x="527.9" y="786" width="3" height="3"/><rect x="542.9" y="786" width="3" height="3"/><rect x="557.9" y="786" width="3" height="3"/><rect x="572.9" y="786" width="3" height="3"/><rect x="587.9" y="786" width="3" height="3"/><rect x="602.9" y="786" width="3" height="3"/><rect x="617.9" y="786" width="3" height="3"/><rect x="632.9" y="786" width="3" height="3"/><rect x="647.9" y="786" width="3" height="3"/><rect x="662.9" y="786" width="3" height="3"/><rect x="677.9" y="786" width="3" height="3"/><rect x="692.9" y="786" width="3" height="3"/><rect x="707.9" y="786" width="3" height="3"/><rect x="722.9" y="786" width="3" height="3"/><rect x="737.9" y="786" width="3" height="3"/><rect x="752.9" y="786" width="3" height="3"/><rect x="767.9" y="786" width="3" height="3"/><rect x="782.9" y="786" width="3" height="3"/><rect x="797.9" y="786" width="3" height="3"/><rect x="812.9" y="786" width="3" height="3"/><rect x="827.9" y="786" width="3" height="3"/><rect x="842.9" y="786" width="3" height="3"/><rect x="857.9" y="786" width="3" height="3"/><rect x="872.9" y="786" width="3" height="3"/><rect x="887.9" y="786" width="3" height="3"/><rect x="902.9" y="786" width="3" height="3"/><rect x="917.9" y="786" width="3" height="3"/><rect x="932.9" y="786" width="3" height="3"/><rect x="947.9" y="786" width="3" height="3"/><rect x="962.9" y="786" width="3" height="3"/><rect x="977.9" y="786" width="3" height="3"/><rect x="992.9" y="786" width="3" height="3"/><rect x="1007.9" y="786" width="3" height="3"/><rect x="1022.9" y="786" width="3" height="3"/><rect x="1037.9" y="786" width="3" height="3"/><rect x="1052.9" y="786" width="3" height="3"/><rect x="1067.9" y="786" width="3" height="3"/><rect x="1082.9" y="786" width="3" height="3"/><rect x="1097.9" y="786" width="3" height="3"/><rect x="1112.9" y="786" width="3" height="3"/><rect x="1127.9" y="786" width="3" height="3"/><rect x="1142.9" y="786" width="3" height="3"/><rect x="1157.9" y="786" width="3" height="3"/><rect x="1172.9" y="786" width="3" height="3"/><rect x="1187.9" y="786" width="3" height="3"/><rect x="1202.9" y="786" width="3" height="3"/><rect x="1217.9" y="786" width="3" height="3"/><rect x="1232.9" y="786" width="3" height="3"/><rect x="1247.9" y="786" width="3" height="3"/><rect x="1262.9" y="786" width="3" height="3"/><rect x="1277.9" y="786" width="3" height="3"/><rect x="1292.9" y="786" width="3" height="3"/><rect x="1307.9" y="786" width="3" height="3"/><rect x="1322.9" y="786" width="3" height="3"/><rect x="1337.9" y="786" width="3" height="3"/><rect x="1352.9" y="786" width="3" height="3"/><rect x="1367.9" y="786" width="3" height="3"/><rect x="1382.9" y="786" width="3" height="3"/><rect x="1397.9" y="786" width="3" height="3"/><rect x="1412.9" y="786" width="3" height="3"/><rect x="1427.9" y="786" width="3" height="3"/><rect x="1442.9" y="786" width="3" height="3"/><rect x="1457.9" y="786" width="3" height="3"/><rect x="1472.9" y="786" width="3" height="3"/><rect x="1487.9" y="786" width="3" height="3"/><rect x="1502.9" y="786" width="3" height="3"/><rect x="1517.9" y="786" width="3" height="3"/><rect x="1532.9" y="786" width="3" height="3"/><rect x="1547.9" y="786" width="3" height="3"/><rect x="1562.9" y="786" width="3" height="3"/><rect x="1577.9" y="786" width="3" height="3"/><rect x="1592.9" y="786" width="3" height="3"/><rect x="1607.9" y="786" width="3" height="3"/><rect x="1622.9" y="786" width="3" height="3"/><rect x="1637.9" y="786" width="3" height="3"/><rect x="1652.9" y="786" width="3" height="3"/><rect x="1667.9" y="786" width="3" height="3"/><rect x="1682.9" y="786" width="3" height="3"/><rect x="1697.9" y="786" width="3" height="3"/><rect x="1712.9" y="786" width="3" height="3"/><rect x="1727.9" y="786" width="3" height="3"/><rect x="1742.9" y="786" width="3" height="3"/><rect x="1757.9" y="786" width="3" height="3"/><rect x="1772.9" y="786" width="3" height="3"/><rect x="1787.9" y="786" width="3" height="3"/><rect x="1802.9" y="786" width="3" height="3"/><rect x="1817.9" y="786" width="3" height="3"/><rect x="1832.9" y="786" width="3" height="3"/><rect x="1847.9" y="786" width="3" height="3"/><rect x="1862.9" y="786" width="3" height="3"/><rect x="1877.9" y="786" width="3" height="3"/><rect x="1892.9" y="786" width="3" height="3"/><rect x="1907.9" y="786" width="3" height="3"/><rect x="1922.9" y="786" width="3" height="3"/><rect x="1937.9" y="786" width="3" height="3"/><rect x="1952.9" y="786" width="3" height="3"/><rect x="1967.9" y="786" width="3" height="3"/><rect x="1982.9" y="786" width="3" height="3"/><rect x="1997.9" y="786" width="3" height="3"/><rect x="2012.9" y="786" width="3" height="3"/><rect x="2027.9" y="786" width="3" height="3"/><rect x="2042.9" y="786" width="3" height="3"/><rect x="2057.9" y="786" width="3" height="3"/><rect x="2072.9" y="786" width="3" height="3"/><rect x="2087.9" y="786" width="3" height="3"/><rect x="2102.9" y="786" width="3" height="3"/><rect x="2117.9" y="786" width="3" height="3"/><rect x="2132.9" y="786" width="3" height="3"/><rect x="2147.9" y="786" width="3" height="3"/><rect x="2162.9" y="786" width="3" height="3"/><rect x="2177.9" y="786" width="3" height="3"/><rect x="2192.9" y="786" width="3" height="3"/><rect x="2207.9" y="786" width="3" height="3"/><rect x="2222.9" y="786" width="3" height="3"/><rect x="2237.9" y="786" width="3" height="3"/><rect x="2252.9" y="786" width="3" height="3"/><rect x="2267.9" y="786" width="3" height="3"/><rect x="2282.9" y="786" width="3" height="3"/><rect x="2297.9" y="786" width="3" height="3"/><rect x="2312.9" y="786" width="3" height="3"/><rect x="2327.9" y="786" width="3" height="3"/><rect x="2342.9" y="786" width="3" height="3"/><rect x="2357.9" y="786" width="3" height="3"/><rect x="2372.9" y="786" width="3" height="3"/><rect x="2387.9" y="786" width="3" height="3"/><rect x="2402.9" y="786" width="3" height="3"/><rect x="2417.9" y="786" width="3" height="3"/><rect x="2432.9" y="786" width="3" height="3"/><rect x="2447.9" y="786" width="3" height="3"/><rect x="2462.9" y="786" width="3" height="3"/><rect x="2477.9" y="786" width="3" height="3"/><rect x="2492.9" y="786" width="3" height="3"/><rect x="2507.9" y="786" width="3" height="3"/><rect x="2522.9" y="786" width="3" height="3"/><rect x="2537.9" y="786" width="3" height="3"/><rect x="2552.9" y="786" width="3" height="3"/><rect x="2567.9" y="786" width="3" height="3"/><rect x="2582.9" y="786" width="3" height="3"/><rect x="2597.9" y="786" width="3" height="3"/><rect x="2612.9" y="786" width="3" height="3"/><rect x="2627.9" y="786" width="3" height="3"/><rect x="2642.9" y="786" width="3" height="3"/></g>
<g fill="#ffca22" stroke="#35263e" stroke-width="0.9"><circle cx="197.4" cy="785.8" r="3.65"/><circle cx="207.0" cy="787.5" r="3.65"/><circle cx="215.6" cy="785.4" r="3.65"/><circle cx="227.2" cy="791.8" r="3.65"/><circle cx="240.0" cy="789.1" r="3.65"/><circle cx="248.5" cy="788.2" r="3.65"/><circle cx="256.5" cy="779.0" r="3.65"/><circle cx="265.3" cy="769.8" r="3.65"/><circle cx="276.9" cy="764.8" r="3.65"/><circle cx="289.4" cy="762.0" r="3.65"/><circle cx="296.3" cy="750.0" r="3.65"/><circle cx="304.8" cy="740.1" r="3.65"/><circle cx="314.6" cy="730.9" r="3.65"/><circle cx="325.9" cy="737.7" r="3.65"/><circle cx="338.4" cy="740.5" r="3.65"/><circle cx="350.8" cy="743.6" r="3.65"/><circle cx="359.0" cy="737.5" r="3.65"/><circle cx="370.4" cy="738.5" r="3.65"/><circle cx="381.8" cy="738.5" r="3.65"/><circle cx="391.7" cy="729.4" r="3.65"/><circle cx="403.4" cy="727.3" r="3.65"/><circle cx="413.3" cy="726.6" r="3.65"/><circle cx="419.8" cy="738.5" r="3.65"/><circle cx="426.5" cy="749.9" r="3.65"/><circle cx="433.6" cy="761.7" r="3.65"/><circle cx="441.4" cy="759.5" r="3.65"/><circle cx="453.1" cy="753.2" r="3.65"/><circle cx="460.6" cy="762.0" r="3.65"/><circle cx="465.9" cy="751.7" r="3.65"/><circle cx="476.5" cy="745.3" r="3.65"/><circle cx="484.3" cy="752.4" r="3.65"/><circle cx="495.4" cy="753.6" r="3.65"/><circle cx="506.5" cy="749.6" r="3.65"/><circle cx="514.6" cy="738.5" r="3.65"/><circle cx="525.9" cy="732.6" r="3.65"/><circle cx="536.9" cy="726.2" r="3.65"/><circle cx="548.5" cy="722.1" r="3.65"/><circle cx="559.1" cy="730.3" r="3.65"/><circle cx="568.8" cy="740.1" r="3.65"/><circle cx="580.7" cy="739.4" r="3.65"/><circle cx="591.4" cy="739.1" r="3.65"/><circle cx="599.6" cy="749.8" r="3.65"/><circle cx="611.7" cy="747.4" r="3.65"/><circle cx="623.8" cy="741.7" r="3.65"/><circle cx="635.8" cy="743.1" r="3.65"/><circle cx="648.6" cy="746.5" r="3.65"/><circle cx="659.0" cy="754.5" r="3.65"/><circle cx="667.5" cy="756.2" r="3.65"/><circle cx="671.3" cy="743.7" r="3.65"/><circle cx="673.9" cy="730.6" r="3.65"/><circle cx="676.0" cy="716.8" r="3.65"/><circle cx="677.4" cy="703.6" r="3.65"/><circle cx="678.7" cy="690.4" r="3.65"/><circle cx="680.1" cy="676.6" r="3.65"/><circle cx="681.3" cy="663.4" r="3.65"/><circle cx="689.1" cy="666.3" r="3.65"/><circle cx="696.2" cy="667.4" r="3.65"/><circle cx="702.3" cy="655.8" r="3.65"/><circle cx="714.4" cy="652.5" r="3.65"/><circle cx="723.9" cy="643.3" r="3.65"/><circle cx="734.1" cy="651.4" r="3.65"/><circle cx="744.8" cy="652.1" r="3.65"/><circle cx="755.1" cy="655.6" r="3.65"/><circle cx="763.4" cy="645.4" r="3.65"/><circle cx="774.0" cy="651.4" r="3.65"/><circle cx="784.3" cy="659.6" r="3.65"/><circle cx="794.6" cy="655.3" r="3.65"/><circle cx="801.3" cy="659.6" r="3.65"/><circle cx="808.4" cy="666.0" r="3.65"/><circle cx="817.9" cy="673.8" r="3.65"/><circle cx="827.2" cy="679.2" r="3.65"/><circle cx="836.8" cy="670.0" r="3.65"/><circle cx="846.5" cy="660.6" r="3.65"/><circle cx="856.7" cy="652.5" r="3.65"/><circle cx="867.8" cy="648.0" r="3.65"/><circle cx="878.8" cy="648.4" r="3.65"/><circle cx="888.9" cy="644.9" r="3.65"/><circle cx="900.3" cy="640.7" r="3.65"/><circle cx="908.4" cy="629.6" r="3.65"/><circle cx="919.3" cy="628.9" r="3.65"/><circle cx="929.4" cy="632.0" r="3.65"/><circle cx="938.2" cy="636.0" r="3.65"/><circle cx="947.1" cy="626.0" r="3.65"/><circle cx="958.5" cy="619.0" r="3.65"/><circle cx="969.4" cy="611.4" r="3.65"/><circle cx="981.5" cy="612.6" r="3.65"/><circle cx="990.7" cy="622.2" r="3.65"/><circle cx="1001.4" cy="628.5" r="3.65"/><circle cx="1012.8" cy="635.0" r="3.65"/><circle cx="1023.4" cy="640.3" r="3.65"/><circle cx="1034.5" cy="633.4" r="3.65"/><circle cx="1047.6" cy="632.2" r="3.65"/><circle cx="1057.2" cy="623.6" r="3.65"/><circle cx="1069.6" cy="623.5" r="3.65"/><circle cx="1081.6" cy="624.2" r="3.65"/><circle cx="1089.5" cy="625.6" r="3.65"/><circle cx="1094.4" cy="638.1" r="3.65"/><circle cx="1099.4" cy="648.8" r="3.65"/><circle cx="1110.0" cy="648.8" r="3.65"/><circle cx="1121.4" cy="645.5" r="3.65"/><circle cx="1127.8" cy="634.9" r="3.65"/><circle cx="1136.3" cy="624.6" r="3.65"/><circle cx="1144.4" cy="614.0" r="3.65"/><circle cx="1155.1" cy="614.0" r="3.65"/><circle cx="1163.6" cy="622.5" r="3.65"/><circle cx="1176.4" cy="626.5" r="3.65"/><circle cx="1186.0" cy="620.1" r="3.65"/><circle cx="1195.0" cy="613.7" r="3.65"/><circle cx="1205.9" cy="609.4" r="3.65"/><circle cx="1216.6" cy="605.7" r="3.65"/><circle cx="1228.2" cy="604.6" r="3.65"/><circle cx="1238.4" cy="596.1" r="3.65"/><circle cx="1246.2" cy="604.9" r="3.65"/><circle cx="1256.4" cy="598.0" r="3.65"/><circle cx="1269.2" cy="598.5" r="3.65"/><circle cx="1280.6" cy="596.1" r="3.65"/><circle cx="1292.0" cy="589.3" r="3.65"/><circle cx="1305.2" cy="589.7" r="3.65"/><circle cx="1315.4" cy="597.5" r="3.65"/><circle cx="1322.6" cy="593.6" r="3.65"/><circle cx="1331.4" cy="585.0" r="3.65"/><circle cx="1340.4" cy="576.6" r="3.65"/><circle cx="1346.8" cy="586.6" r="3.65"/><circle cx="1350.6" cy="599.7" r="3.65"/><circle cx="1354.2" cy="612.7" r="3.65"/><circle cx="1359.1" cy="625.2" r="3.65"/><circle cx="1363.0" cy="637.7" r="3.65"/><circle cx="1364.8" cy="651.1" r="3.65"/><circle cx="1366.7" cy="664.6" r="3.65"/><circle cx="1370.9" cy="674.5" r="3.65"/><circle cx="1381.6" cy="671.4" r="3.65"/><circle cx="1386.1" cy="658.6" r="3.65"/><circle cx="1394.4" cy="650.1" r="3.65"/><circle cx="1398.6" cy="637.3" r="3.65"/><circle cx="1410.6" cy="632.0" r="3.65"/><circle cx="1420.5" cy="629.1" r="3.65"/><circle cx="1426.9" cy="617.4" r="3.65"/><circle cx="1436.6" cy="608.5" r="3.65"/><circle cx="1446.8" cy="611.7" r="3.65"/><circle cx="1454.0" cy="601.5" r="3.65"/><circle cx="1466.4" cy="598.7" r="3.65"/><circle cx="1471.1" cy="585.9" r="3.65"/><circle cx="1478.0" cy="589.4" r="3.65"/><circle cx="1485.1" cy="600.4" r="3.65"/><circle cx="1493.4" cy="592.8" r="3.65"/><circle cx="1506.2" cy="593.0" r="3.65"/><circle cx="1517.1" cy="585.5" r="3.65"/><circle cx="1527.9" cy="580.8" r="3.65"/><circle cx="1536.4" cy="590.9" r="3.65"/><circle cx="1545.2" cy="584.0" r="3.65"/><circle cx="1556.6" cy="585.9" r="3.65"/><circle cx="1568.9" cy="584.5" r="3.65"/><circle cx="1582.0" cy="586.5" r="3.65"/><circle cx="1595.2" cy="588.6" r="3.65"/><circle cx="1605.8" cy="592.3" r="3.65"/><circle cx="1616.0" cy="587.3" r="3.65"/><circle cx="1627.7" cy="581.6" r="3.65"/><circle cx="1639.5" cy="587.3" r="3.65"/><circle cx="1646.6" cy="598.7" r="3.65"/><circle cx="1652.3" cy="604.4" r="3.65"/><circle cx="1660.4" cy="593.6" r="3.65"/><circle cx="1667.6" cy="582.4" r="3.65"/><circle cx="1677.8" cy="575.8" r="3.65"/><circle cx="1690.9" cy="574.1" r="3.65"/><circle cx="1703.4" cy="576.7" r="3.65"/><circle cx="1711.9" cy="570.3" r="3.65"/><circle cx="1720.5" cy="568.4" r="3.65"/><circle cx="1728.7" cy="558.5" r="3.65"/><circle cx="1734.9" cy="569.2" r="3.65"/><circle cx="1742.0" cy="561.8" r="3.65"/><circle cx="1754.5" cy="558.1" r="3.65"/><circle cx="1765.9" cy="566.0" r="3.65"/><circle cx="1772.3" cy="555.4" r="3.65"/><circle cx="1784.7" cy="554.0" r="3.65"/><circle cx="1797.2" cy="548.8" r="3.65"/><circle cx="1803.3" cy="536.9" r="3.65"/><circle cx="1811.4" cy="527.0" r="3.65"/><circle cx="1814.9" cy="514.0" r="3.65"/><circle cx="1823.4" cy="504.9" r="3.65"/><circle cx="1832.7" cy="498.6" r="3.65"/><circle cx="1843.6" cy="493.4" r="3.65"/><circle cx="1854.0" cy="500.0" r="3.65"/><circle cx="1863.9" cy="503.1" r="3.65"/><circle cx="1876.7" cy="501.2" r="3.65"/><circle cx="1890.3" cy="501.2" r="3.65"/><circle cx="1901.5" cy="501.1" r="3.65"/><circle cx="1912.0" cy="492.0" r="3.65"/><circle cx="1923.7" cy="488.8" r="3.65"/><circle cx="1936.2" cy="489.5" r="3.65"/><circle cx="1946.4" cy="482.4" r="3.65"/><circle cx="1952.9" cy="471.3" r="3.65"/><circle cx="1964.1" cy="476.0" r="3.65"/><circle cx="1976.2" cy="479.5" r="3.65"/><circle cx="1986.6" cy="478.6" r="3.65"/><circle cx="1996.5" cy="470.7" r="3.65"/><circle cx="2006.2" cy="462.1" r="3.65"/><circle cx="2015.0" cy="467.5" r="3.65"/><circle cx="2025.9" cy="459.7" r="3.65"/><circle cx="2036.3" cy="458.7" r="3.65"/><circle cx="2049.1" cy="458.7" r="3.65"/><circle cx="2057.9" cy="469.3" r="3.65"/><circle cx="2068.3" cy="466.8" r="3.65"/><circle cx="2080.8" cy="462.5" r="3.65"/><circle cx="2092.7" cy="462.1" r="3.65"/><circle cx="2104.5" cy="460.4" r="3.65"/><circle cx="2114.4" cy="451.4" r="3.65"/><circle cx="2125.1" cy="451.1" r="3.65"/><circle cx="2131.5" cy="462.9" r="3.65"/><circle cx="2139.6" cy="473.2" r="3.65"/><circle cx="2146.4" cy="463.2" r="3.65"/><circle cx="2157.8" cy="464.2" r="3.65"/><circle cx="2170.1" cy="458.2" r="3.65"/><circle cx="2182.3" cy="460.4" r="3.65"/><circle cx="2192.3" cy="456.4" r="3.65"/><circle cx="2198.5" cy="468.2" r="3.65"/><circle cx="2206.1" cy="476.7" r="3.65"/><circle cx="2216.4" cy="469.6" r="3.65"/><circle cx="2226.6" cy="462.1" r="3.65"/><circle cx="2237.2" cy="469.8" r="3.65"/><circle cx="2248.0" cy="476.8" r="3.65"/><circle cx="2254.1" cy="488.9" r="3.65"/><circle cx="2259.8" cy="492.2" r="3.65"/><circle cx="2265.5" cy="479.7" r="3.65"/><circle cx="2272.2" cy="468.3" r="3.65"/><circle cx="2284.7" cy="467.6" r="3.65"/><circle cx="2296.3" cy="474.3" r="3.65"/><circle cx="2305.3" cy="468.3" r="3.65"/><circle cx="2313.8" cy="469.0" r="3.65"/><circle cx="2318.4" cy="481.8" r="3.65"/><circle cx="2326.6" cy="472.8" r="3.65"/><circle cx="2333.4" cy="482.1" r="3.65"/><circle cx="2338.7" cy="489.9" r="3.65"/><circle cx="2344.8" cy="489.3" r="3.65"/><circle cx="2348.6" cy="502.1" r="3.65"/><circle cx="2360.0" cy="501.0" r="3.65"/><circle cx="2373.2" cy="500.3" r="3.65"/><circle cx="2380.3" cy="511.3" r="3.65"/><circle cx="2383.4" cy="524.4" r="3.65"/><circle cx="2389.1" cy="532.6" r="3.65"/><circle cx="2396.9" cy="540.7" r="3.65"/><circle cx="2406.6" cy="537.2" r="3.65"/><circle cx="2414.7" cy="536.5" r="3.65"/><circle cx="2424.6" cy="532.2" r="3.65"/><circle cx="2435.7" cy="527.5" r="3.65"/><circle cx="2444.8" cy="521.1" r="3.65"/><circle cx="2457.0" cy="521.6" r="3.65"/><circle cx="2469.3" cy="525.4" r="3.65"/><circle cx="2480.7" cy="531.1" r="3.65"/><circle cx="2490.2" cy="541.0" r="3.65"/><circle cx="2497.0" cy="552.4" r="3.65"/><circle cx="2502.0" cy="565.2" r="3.65"/><circle cx="2511.2" cy="559.9" r="3.65"/><circle cx="2520.5" cy="551.0" r="3.65"/><circle cx="2532.6" cy="545.0" r="3.65"/><circle cx="2542.2" cy="537.9" r="3.65"/><circle cx="2553.2" cy="533.6" r="3.65"/><circle cx="2563.1" cy="537.2" r="3.65"/><circle cx="2573.8" cy="529.7" r="3.65"/><circle cx="2586.4" cy="526.8" r="3.65"/><circle cx="2596.2" cy="533.0" r="3.65"/><circle cx="2605.3" cy="540.6" r="3.65"/><circle cx="2616.6" cy="542.4" r="3.65"/><circle cx="2627.2" cy="539.6" r="3.65"/><circle cx="2632.7" cy="527.3" r="3.65"/><circle cx="2641.6" cy="516.7" r="3.65"/><circle cx="2650.6" cy="520.0" r="3.65"/></g>
<!-- year ticks -->
<g fill="#e6def2">
<rect x="384" y="873" width="2" height="21"/>
<rect x="831.3" y="873" width="2" height="21"/>
<rect x="1279" y="873" width="2" height="21"/>
<rect x="1726.7" y="873" width="2" height="21"/>
<rect x="2174.4" y="873" width="2" height="21"/>
<rect x="2622" y="873" width="2" height="21"/>
</g>
</svg>



<!-- cards -->
<div style="position:absolute;left:121px;top:1057px;width:2531px;height:10px;background:#3e3762"></div>
<div class="card" style="left:121.0px;top:951px;height:116px;background:#3f3862"><div style="position:absolute;left:0;top:-3px;width:346px;height:3px;background:repeating-linear-gradient(90deg,#ffd21f 0 3px,transparent 3px 6px)"></div></div><div class="card" style="left:485.2px;top:951px;height:107px"><div style="position:absolute;left:0;top:0;width:346px;height:3px;background:#8ff7c9;border-radius:3px 3px 0 0"></div></div><div class="card" style="left:849.4px;top:951px;height:107px"><div style="position:absolute;left:0;top:0;width:346px;height:3px;background:#0fd6d6;border-radius:3px 3px 0 0"></div></div><div class="card" style="left:1213.6px;top:951px;height:107px"><div style="position:absolute;left:0;top:0;width:346px;height:3px;background:#0aa9c0;border-radius:3px 3px 0 0"></div></div><div class="card" style="left:1577.8px;top:951px;height:107px"><div style="position:absolute;left:0;top:0;width:346px;height:3px;background:#7150a8;border-radius:3px 3px 0 0"></div></div><div class="card" style="left:1942.0px;top:951px;height:107px"><div style="position:absolute;left:0;top:0;width:346px;height:3px;background:#0a86b0;border-radius:3px 3px 0 0"></div></div><div class="card" style="left:2306.2px;top:951px;height:107px"><div style="position:absolute;left:0;top:0;width:346px;height:3px;background:#6a489f;border-radius:3px 3px 0 0"></div></div>

<!-- paragraph -->

<!-- table -->
<svg style="position:absolute;left:2402px;top:1290px" width="18" height="18"><polyline points="4.5,7 8.5,11 12.5,7" fill="none" stroke="#fff" stroke-width="2.2"/></svg>
<div class="row" style="top:1325px"></div><div class="row" style="top:1391px"></div><div class="row" style="top:1457px"></div><div class="row" style="top:1523px"></div><div class="row" style="top:1589px"></div><div class="row" style="top:1655px"></div>

<div style="position:absolute;left:338.71px;top:47.53px;font-size:20.4px;font-weight:normal;color:#1b86a8;line-height:1;white-space:nowrap;transform-origin:0 0;transform:scaleX(0.9927)">OVERVIEW</div>
<div style="position:absolute;left:485.77px;top:47.53px;font-size:20.4px;font-weight:normal;color:#1b86a8;line-height:1;white-space:nowrap;transform-origin:0 0;transform:scaleX(0.9649)">EXPLORE</div>
<div style="position:absolute;left:623.75px;top:47.53px;font-size:20.4px;font-weight:normal;color:#12d3f5;line-height:1;white-space:nowrap;transform-origin:0 0;transform:scaleX(0.9737)">REPORTS</div>
<div style="position:absolute;left:772.60px;top:47.53px;font-size:20.4px;font-weight:normal;color:#1b86a8;line-height:1;white-space:nowrap;transform-origin:0 0;transform:scaleX(1.0304)">WATCHLIST</div>
<div style="position:absolute;left:954.81px;top:47.53px;font-size:20.4px;font-weight:normal;color:#1b86a8;line-height:1;white-space:nowrap;transform-origin:0 0;transform:scaleX(1.0444)">FIND</div>
<div style="position:absolute;left:2172.82px;top:47.06px;font-size:19.3px;font-weight:normal;color:#ffffff;line-height:1;white-space:nowrap;transform-origin:0 0;transform:scaleX(0.9824)">Data calculated</div>
<div style="position:absolute;left:2310.80px;top:47.06px;font-size:19.3px;font-weight:bold;color:#14d0f4;line-height:1;white-space:nowrap;transform-origin:0 0;transform:scaleX(0.9725)">from 01 Aug 2017 to today</div>
<div style="position:absolute;left:2567.34px;top:47.06px;font-size:19.3px;font-weight:normal;color:#ffffff;line-height:1;white-space:nowrap;transform-origin:0 0;transform:scaleX(1.0615)">in</div>
<div style="position:absolute;left:2590.01px;top:47.06px;font-size:19.3px;font-weight:bold;color:#14d0f4;line-height:1;white-space:nowrap;transform-origin:0 0;transform:scaleX(0.9868)">CHF</div>
<div style="position:absolute;left:120.81px;top:185.66px;font-size:19.3px;font-weight:normal;color:#ffffff;line-height:1;white-space:nowrap;transform-origin:0 0;transform:scaleX(0.9939)">Showing change in value from 01 Aug 2017 to today for</div>
<div style="position:absolute;left:121.90px;top:266.70px;font-size:28px;font-weight:normal;color:#ffffff;line-height:1;white-space:nowrap;transform-origin:0 0;transform:scaleX(0.9592)">The change of</div>
<div style="position:absolute;left:320.40px;top:266.70px;font-size:28px;font-weight:bold;color:#ffffff;line-height:1;white-space:nowrap;transform-origin:0 0;transform:scaleX(0.9573)">40’832’379.56</div>
<div style="position:absolute;left:493.89px;top:276.86px;font-size:16px;font-weight:normal;color:#ffffff;line-height:1;white-space:nowrap;transform-origin:0 0;transform:scaleX(1.0065)">CHF</div>
<div style="position:absolute;left:532.66px;top:266.70px;font-size:28px;font-weight:normal;color:#ffffff;line-height:1;white-space:nowrap;transform-origin:0 0;transform:scaleX(0.9700)">is a result</div>
<div style="position:absolute;left:1112.48px;top:266.70px;font-size:28px;font-weight:bold;color:#3ff0ad;line-height:1;white-space:nowrap;transform-origin:0 0;transform:scaleX(0.9241)">67</div>
<div style="position:absolute;left:1143.99px;top:276.86px;font-size:16px;font-weight:normal;color:#3ff0ad;line-height:1;white-space:nowrap;transform-origin:0 0;transform:scaleX(1.0065)">CHF</div>
<div style="position:absolute;left:1217.66px;top:266.70px;font-size:28px;font-weight:bold;color:#3ff0ad;line-height:1;white-space:nowrap;transform-origin:0 0;transform:scaleX(0.9449)">26.65</div>
<div style="position:absolute;left:1287.50px;top:276.86px;font-size:16px;font-weight:normal;color:#3ff0ad;line-height:1;white-space:nowrap;transform-origin:0 0;transform:scaleX(0.9571)">%</div>
<div style="position:absolute;left:1307.70px;top:266.70px;font-size:28px;font-weight:normal;color:#ffffff;line-height:1;white-space:nowrap;transform-origin:0 0;transform:scaleX(0.9994)">and net flow of</div>
<div style="position:absolute;left:1497.64px;top:266.70px;font-size:28px;font-weight:bold;color:#ffffff;line-height:1;white-space:nowrap;transform-origin:0 0;transform:scaleX(0.9562)">–21’213.11</div>
<div style="position:absolute;left:1634.56px;top:276.86px;font-size:16px;font-weight:normal;color:#ffffff;line-height:1;white-space:nowrap;transform-origin:0 0;transform:scaleX(1.1424)">CHF.</div>
<div style="position:absolute;left:128.70px;top:386.78px;font-size:16.8px;font-weight:normal;color:#3cf2b0;line-height:1;white-space:nowrap;transform-origin:0 0;transform:scaleX(0.9956)">60.0m</div>
<div style="position:absolute;left:128.70px;top:451.98px;font-size:16.8px;font-weight:normal;color:#3cf2b0;line-height:1;white-space:nowrap;transform-origin:0 0;transform:scaleX(0.9956)">50.0m</div>
<div style="position:absolute;left:129.70px;top:517.18px;font-size:16.8px;font-weight:normal;color:#3cf2b0;line-height:1;white-space:nowrap;transform-origin:0 0;transform:scaleX(0.9739)">40.0m</div>
<div style="position:absolute;left:128.70px;top:582.38px;font-size:16.8px;font-weight:normal;color:#3cf2b0;line-height:1;white-space:nowrap;transform-origin:0 0;transform:scaleX(0.9956)">30.0m</div>
<div style="position:absolute;left:128.70px;top:647.58px;font-size:16.8px;font-weight:normal;color:#3cf2b0;line-height:1;white-space:nowrap;transform-origin:0 0;transform:scaleX(0.9956)">20.0m</div>
<div style="position:absolute;left:128.70px;top:712.78px;font-size:16.8px;font-weight:normal;color:#3cf2b0;line-height:1;white-space:nowrap;transform-origin:0 0;transform:scaleX(0.9956)">10.0m</div>
<div style="position:absolute;left:165.50px;top:777.98px;font-size:16.8px;font-weight:normal;color:#c3c3ef;line-height:1;white-space:nowrap;transform-origin:0 0;transform:scaleX(1.0000)">0</div>
<div style="position:absolute;left:121.20px;top:843.18px;font-size:16.8px;font-weight:normal;color:#ff4f9b;line-height:1;white-space:nowrap;transform-origin:0 0;transform:scaleX(0.9691)">–10.0m</div>
<div style="position:absolute;left:590.99px;top:875.83px;font-size:16.5px;font-weight:normal;color:#c3c3ef;line-height:1;white-space:nowrap;transform-origin:0 0;transform:scaleX(1.0086)">2018</div>
<div style="position:absolute;left:1038.69px;top:875.83px;font-size:16.5px;font-weight:normal;color:#c3c3ef;line-height:1;white-space:nowrap;transform-origin:0 0;transform:scaleX(1.0086)">2019</div>
<div style="position:absolute;left:1486.39px;top:875.83px;font-size:16.5px;font-weight:normal;color:#c3c3ef;line-height:1;white-space:nowrap;transform-origin:0 0;transform:scaleX(1.0086)">2020</div>
<div style="position:absolute;left:1934.09px;top:875.83px;font-size:16.5px;font-weight:normal;color:#c3c3ef;line-height:1;white-space:nowrap;transform-origin:0 0;transform:scaleX(1.0086)">2021</div>
<div style="position:absolute;left:2381.79px;top:875.83px;font-size:16.5px;font-weight:normal;color:#c3c3ef;line-height:1;white-space:nowrap;transform-origin:0 0;transform:scaleX(1.0086)">2022</div>
<div style="position:absolute;left:140.00px;top:975.32px;font-size:18.4px;font-weight:normal;color:#ffffff;line-height:1;white-space:nowrap;transform-origin:0 0;transform:scaleX(1.0176)">Total Change</div>
<div style="position:absolute;left:502.43px;top:975.32px;font-size:18.4px;font-weight:normal;color:#bdb3e6;line-height:1;white-space:nowrap;transform-origin:0 0;transform:scaleX(1.0659)">Unrealised Profit</div>
<div style="position:absolute;left:866.67px;top:975.32px;font-size:18.4px;font-weight:normal;color:#bdb3e6;line-height:1;white-space:nowrap;transform-origin:0 0;transform:scaleX(1.0269)">Realised Profit</div>
<div style="position:absolute;left:1229.34px;top:975.32px;font-size:18.4px;font-weight:normal;color:#bdb3e6;line-height:1;white-space:nowrap;transform-origin:0 0;transform:scaleX(1.0810)">Income</div>
<div style="position:absolute;left:1594.51px;top:975.32px;font-size:18.4px;font-weight:normal;color:#bdb3e6;line-height:1;white-space:nowrap;transform-origin:0 0;transform:scaleX(0.9937)">Expenses</div>
<div style="position:absolute;left:1957.17px;top:975.32px;font-size:18.4px;font-weight:normal;color:#bdb3e6;line-height:1;white-space:nowrap;transform-origin:0 0;transform:scaleX(1.1145)">Inflows</div>
<div style="position:absolute;left:2322.38px;top:975.32px;font-size:18.4px;font-weight:normal;color:#bdb3e6;line-height:1;white-space:nowrap;transform-origin:0 0;transform:scaleX(1.1157)">Outflows</div>
<div style="position:absolute;left:140.00px;top:1011.60px;font-size:25.4px;font-weight:bold;color:#ffffff;line-height:1;white-space:nowrap;transform-origin:0 0;transform:scaleX(1.0579)">40’832’380</div>
<div style="position:absolute;left:275.98px;top:1019.56px;font-size:16px;font-weight:normal;color:#a9a2c4;line-height:1;white-space:nowrap;transform-origin:0 0;transform:scaleX(1.0194)">CHF</div>
<div style="position:absolute;left:502.44px;top:1011.60px;font-size:25.4px;font-weight:bold;color:#ffffff;line-height:1;white-space:nowrap;transform-origin:0 0;transform:scaleX(1.0579)">36’632’545</div>
<div style="position:absolute;left:640.38px;top:1019.56px;font-size:16px;font-weight:normal;color:#a9a2c4;line-height:1;white-space:nowrap;transform-origin:0 0;transform:scaleX(1.0161)">CHF</div>
<div style="position:absolute;left:866.62px;top:1011.60px;font-size:25.4px;font-weight:bold;color:#ffffff;line-height:1;white-space:nowrap;transform-origin:0 0;transform:scaleX(1.0757)">3’714’866</div>
<div style="position:absolute;left:989.80px;top:1019.56px;font-size:16px;font-weight:normal;color:#a9a2c4;line-height:1;white-space:nowrap;transform-origin:0 0;transform:scaleX(1.0000)">CHF</div>
<div style="position:absolute;left:1231.43px;top:1011.60px;font-size:25.4px;font-weight:bold;color:#ffffff;line-height:1;white-space:nowrap;transform-origin:0 0;transform:scaleX(1.0676)">1’773’860</div>
<div style="position:absolute;left:1353.91px;top:1019.56px;font-size:16px;font-weight:normal;color:#a9a2c4;line-height:1;white-space:nowrap;transform-origin:0 0;transform:scaleX(0.9935)">CHF</div>
<div style="position:absolute;left:1594.43px;top:1011.60px;font-size:25.4px;font-weight:bold;color:#ffffff;line-height:1;white-space:nowrap;transform-origin:0 0;transform:scaleX(1.0696)">–1’267’677</div>
<div style="position:absolute;left:1732.07px;top:1019.56px;font-size:16px;font-weight:normal;color:#a9a2c4;line-height:1;white-space:nowrap;transform-origin:0 0;transform:scaleX(1.0290)">CHF</div>
<div style="position:absolute;left:1959.04px;top:1011.60px;font-size:25.4px;font-weight:bold;color:#ffffff;line-height:1;white-space:nowrap;transform-origin:0 0;transform:scaleX(1.0613)">2’486’765</div>
<div style="position:absolute;left:2081.18px;top:1019.56px;font-size:16px;font-weight:normal;color:#a9a2c4;line-height:1;white-space:nowrap;transform-origin:0 0;transform:scaleX(1.0226)">CHF</div>
<div style="position:absolute;left:2322.43px;top:1011.60px;font-size:25.4px;font-weight:bold;color:#ffffff;line-height:1;white-space:nowrap;transform-origin:0 0;transform:scaleX(1.0683)">–2’507’978</div>
<div style="position:absolute;left:2460.40px;top:1019.56px;font-size:16px;font-weight:normal;color:#a9a2c4;line-height:1;white-space:nowrap;transform-origin:0 0;transform:scaleX(1.0000)">CHF</div>
<div style="position:absolute;left:121.80px;top:1153.98px;font-size:27.2px;font-weight:normal;color:#ffffff;line-height:1;white-space:nowrap;transform-origin:0 0;transform:scaleX(1.0054)">The total change is an increase in net wealth from</div>
<div style="position:absolute;left:731.91px;top:1153.98px;font-size:27.2px;font-weight:bold;color:#ffffff;line-height:1;white-space:nowrap;transform-origin:0 0;transform:scaleX(0.9930)">152’646’447.58</div>
<div style="position:absolute;left:921.01px;top:1163.03px;font-size:16.5px;font-weight:normal;color:#ffffff;line-height:1;white-space:nowrap;transform-origin:0 0;transform:scaleX(0.9875)">CHF</div>
<div style="position:absolute;left:960.70px;top:1153.98px;font-size:27.2px;font-weight:normal;color:#ffffff;line-height:1;white-space:nowrap;transform-origin:0 0;transform:scaleX(1.1364)">to</div>
<div style="position:absolute;left:993.72px;top:1153.98px;font-size:27.2px;font-weight:bold;color:#ffffff;line-height:1;white-space:nowrap;transform-origin:0 0;transform:scaleX(0.9887)">193’478’827.13</div>
<div style="position:absolute;left:1182.64px;top:1163.03px;font-size:16.5px;font-weight:normal;color:#ffffff;line-height:1;white-space:nowrap;transform-origin:0 0;transform:scaleX(0.9594)">CHF</div>
<div style="position:absolute;left:1223.00px;top:1153.98px;font-size:27.2px;font-weight:normal;color:#ffffff;line-height:1;white-space:nowrap;transform-origin:0 0;transform:scaleX(1.0245)">from 01 Aug 2017 to today.</div>
<div style="position:absolute;left:121.80px;top:1199.48px;font-size:27.2px;font-weight:normal;color:#ffffff;line-height:1;white-space:nowrap;transform-origin:0 0;transform:scaleX(1.0444)">The following items contributed to this result.</div>
<div style="position:absolute;left:159.57px;top:1289.49px;font-size:19.5px;font-weight:normal;color:#b7aedb;line-height:1;white-space:nowrap;transform-origin:0 0;transform:scaleX(1.0657)">Item</div>
<div style="position:absolute;left:2423.60px;top:1289.49px;font-size:19.5px;font-weight:bold;color:#f2effa;line-height:1;white-space:nowrap;transform-origin:0 0;transform:scaleX(0.9492)">Total value of change</div>
<div style="position:absolute;left:160.64px;top:1344.22px;font-size:21px;font-weight:normal;color:#14d0f4;line-height:1;white-space:nowrap;transform-origin:0 0;transform:scaleX(1.0551)">SmartLogistics</div>
<div style="position:absolute;left:2448.99px;top:1343.72px;font-size:21.6px;font-weight:bold;color:#ffffff;line-height:1;white-space:nowrap;transform-origin:0 0;transform:scaleX(1.0113)">9’365’000.00</div>
<div style="position:absolute;left:2577.29px;top:1348.03px;font-size:16.5px;font-weight:bold;color:#ffffff;line-height:1;white-space:nowrap;transform-origin:0 0;transform:scaleX(1.0094)">CHF</div>
<div style="position:absolute;left:161.27px;top:1410.22px;font-size:21px;font-weight:normal;color:#14d0f4;line-height:1;white-space:nowrap;transform-origin:0 0;transform:scaleX(1.0269)">Gold 1 Oz</div>
<div style="position:absolute;left:2450.00px;top:1409.72px;font-size:21.6px;font-weight:bold;color:#ffffff;line-height:1;white-space:nowrap;transform-origin:0 0;transform:scaleX(1.0032)">4’002’524.47</div>
<div style="position:absolute;left:2577.29px;top:1414.03px;font-size:16.5px;font-weight:bold;color:#ffffff;line-height:1;white-space:nowrap;transform-origin:0 0;transform:scaleX(1.0094)">CHF</div>
<div style="position:absolute;left:160.19px;top:1476.22px;font-size:21px;font-weight:normal;color:#14d0f4;line-height:1;white-space:nowrap;transform-origin:0 0;transform:scaleX(1.0558)">Hotel in Lenzerheide</div>
<div style="position:absolute;left:2448.99px;top:1475.72px;font-size:21.6px;font-weight:bold;color:#ffffff;line-height:1;white-space:nowrap;transform-origin:0 0;transform:scaleX(1.0113)">3’526’085.66</div>
<div style="position:absolute;left:2577.29px;top:1480.03px;font-size:16.5px;font-weight:bold;color:#ffffff;line-height:1;white-space:nowrap;transform-origin:0 0;transform:scaleX(1.0094)">CHF</div>
<div style="position:absolute;left:160.21px;top:1542.22px;font-size:21px;font-weight:normal;color:#14d0f4;line-height:1;white-space:nowrap;transform-origin:0 0;transform:scaleX(1.0464)">Ferrari 250 GTO</div>
<div style="position:absolute;left:2448.99px;top:1541.72px;font-size:21.6px;font-weight:bold;color:#ffffff;line-height:1;white-space:nowrap;transform-origin:0 0;transform:scaleX(1.0113)">2’500’000.00</div>
<div style="position:absolute;left:2577.29px;top:1546.03px;font-size:16.5px;font-weight:bold;color:#ffffff;line-height:1;white-space:nowrap;transform-origin:0 0;transform:scaleX(1.0094)">CHF</div>
<div style="position:absolute;left:162.30px;top:1608.22px;font-size:21px;font-weight:normal;color:#14d0f4;line-height:1;white-space:nowrap;transform-origin:0 0;transform:scaleX(1.0077)">Alcoa-WI Rg</div>
<div style="position:absolute;left:2450.80px;top:1607.72px;font-size:21.6px;font-weight:bold;color:#ffffff;line-height:1;white-space:nowrap;transform-origin:0 0;transform:scaleX(0.9968)">1’876’810.20</div>
<div style="position:absolute;left:2577.29px;top:1612.03px;font-size:16.5px;font-weight:bold;color:#ffffff;line-height:1;white-space:nowrap;transform-origin:0 0;transform:scaleX(1.0094)">CHF</div>
<div style="position:absolute;left:162.30px;top:1674.22px;font-size:21px;font-weight:normal;color:#14d0f4;line-height:1;white-space:nowrap;transform-origin:0 0;transform:scaleX(1.0048)">Alnylam Pharma Rg</div>
<div style="position:absolute;left:2450.80px;top:1673.72px;font-size:21.6px;font-weight:bold;color:#ffffff;line-height:1;white-space:nowrap;transform-origin:0 0;transform:scaleX(0.9968)">1’869’862.17</div>
<div style="position:absolute;left:2577.29px;top:1678.03px;font-size:16.5px;font-weight:bold;color:#ffffff;line-height:1;white-space:nowrap;transform-origin:0 0;transform:scaleX(1.0094)">CHF</div>
<svg style="position:absolute;left:290px;top:266px" width="30" height="30"><circle cx="16.5" cy="15.9" r="4.6" fill="#ffc91f"/></svg>
<svg style="position:absolute;left:1190px;top:262px" width="28" height="34"><polyline points="3.5,15.5 11.2,7.5 19,15.5" fill="none" stroke="#3ff0ad" stroke-width="2.6"/><line x1="11.2" y1="8" x2="11.2" y2="28.5" stroke="#3ff0ad" stroke-width="2.8"/></svg>

<!-- dropdown -->
<div class="dd" id="dd">
<div class="r" style="top:2px"><div class="cb"><svg width="24" height="24" style="position:absolute;left:0;top:0"><polyline points="5.4,11.8 10.5,16.2 18.8,7.3" fill="none" stroke="#1a1433" stroke-width="3"/></svg></div><div class="ex" style="left:48.0px"><svg width="24" height="24" style="position:absolute;left:0;top:0"><polyline points="4.6,8.2 11.7,15.3 18.6,8.2" fill="none" stroke="#1a1433" stroke-width="3"/></svg></div></div><div class="r" style="top:56px"><div class="cb"><svg width="24" height="24" style="position:absolute;left:0;top:0"><polyline points="5.4,11.8 10.5,16.2 18.8,7.3" fill="none" stroke="#8c8a9c" stroke-width="3"/></svg></div></div><div class="r" style="top:110px"><div class="cb"><svg width="24" height="24" style="position:absolute;left:0;top:0"><polyline points="5.4,11.8 10.5,16.2 18.8,7.3" fill="none" stroke="#8c8a9c" stroke-width="3"/></svg></div></div><div class="r" style="top:164px"><div class="cb"><svg width="24" height="24" style="position:absolute;left:0;top:0"><polyline points="5.4,11.8 10.5,16.2 18.8,7.3" fill="none" stroke="#8c8a9c" stroke-width="3"/></svg></div></div><div class="r" style="top:218px"><div class="cb"><svg width="24" height="24" style="position:absolute;left:0;top:0"><polyline points="5.4,11.8 10.5,16.2 18.8,7.3" fill="none" stroke="#1a1433" stroke-width="3"/></svg></div><div class="ex" style="left:48.0px"><svg width="24" height="24" style="position:absolute;left:0;top:0"><polyline points="4.6,8.2 11.7,15.3 18.6,8.2" fill="none" stroke="#1a1433" stroke-width="3"/></svg></div></div><div class="r" style="top:272px"><div class="cb"><svg width="24" height="24" style="position:absolute;left:0;top:0"><polyline points="5.4,11.8 10.5,16.2 18.8,7.3" fill="none" stroke="#8c8a9c" stroke-width="3"/></svg></div><div class="ex" style="left:72.5px"><svg width="24" height="24" style="position:absolute;left:0;top:0"><polyline points="8.5,5 15.5,12 8.5,19" fill="none" stroke="#1a1433" stroke-width="3"/></svg></div></div><div class="r" style="top:326px"><div class="cb"><svg width="24" height="24" style="position:absolute;left:0;top:0"><polyline points="5.4,11.8 10.5,16.2 18.8,7.3" fill="none" stroke="#8c8a9c" stroke-width="3"/></svg></div></div><div class="r" style="top:380px"><div class="cb"><svg width="24" height="24" style="position:absolute;left:0;top:0"><polyline points="5.4,11.8 10.5,16.2 18.8,7.3" fill="none" stroke="#1a1433" stroke-width="3"/></svg></div><div class="ex" style="left:48.0px"><svg width="24" height="24" style="position:absolute;left:0;top:0"><polyline points="8.5,5 15.5,12 8.5,19" fill="none" stroke="#1a1433" stroke-width="3"/></svg></div></div>
</div>
<div style="position:absolute;left:686.90px;top:186.32px;font-size:21px;font-weight:normal;color:#1d1a36;line-height:1;white-space:nowrap;transform-origin:0 0;transform:scaleX(0.9851)">ALEX Services AG</div>
<div style="position:absolute;left:710.70px;top:240.32px;font-size:21px;font-weight:normal;color:#1d1a36;line-height:1;white-space:nowrap;transform-origin:0 0;transform:scaleX(0.9787)">ALEX Real Estate AG</div>
<div style="position:absolute;left:710.70px;top:294.32px;font-size:21px;font-weight:normal;color:#1d1a36;line-height:1;white-space:nowrap;transform-origin:0 0;transform:scaleX(1.0194)">ALEX Venture Capital AG</div>
<div style="position:absolute;left:710.70px;top:348.32px;font-size:21px;font-weight:normal;color:#1d1a36;line-height:1;white-space:nowrap;transform-origin:0 0;transform:scaleX(0.9793)">ALEX Business AG</div>
<div style="position:absolute;left:686.90px;top:402.32px;font-size:21px;font-weight:normal;color:#1d1a36;line-height:1;white-space:nowrap;transform-origin:0 0;transform:scaleX(1.0206)">JMG Trust</div>
<div style="position:absolute;left:710.70px;top:456.32px;font-size:21px;font-weight:normal;color:#1d1a36;line-height:1;white-space:nowrap;transform-origin:0 0;transform:scaleX(1.0175)">JMG Bahamas Limited</div>
<div style="position:absolute;left:710.70px;top:510.32px;font-size:21px;font-weight:normal;color:#1d1a36;line-height:1;white-space:nowrap;transform-origin:0 0;transform:scaleX(1.0015)">JMG Real Estate Bahamas Limited</div>
<div style="position:absolute;left:685.83px;top:564.32px;font-size:21px;font-weight:normal;color:#1d1a36;line-height:1;white-space:nowrap;transform-origin:0 0;transform:scaleX(1.0695)">directly held wealth</div>

<!-- fab -->
<svg style="position:absolute;left:2680px;top:1612px" width="76" height="76"><circle cx="37" cy="37" r="30.2" fill="#06cef4"/><rect x="22" y="35.5" width="30" height="3" fill="#28224a"/><rect x="35.5" y="22.4" width="3" height="29.3" fill="#28224a"/></svg>
</body></html>
